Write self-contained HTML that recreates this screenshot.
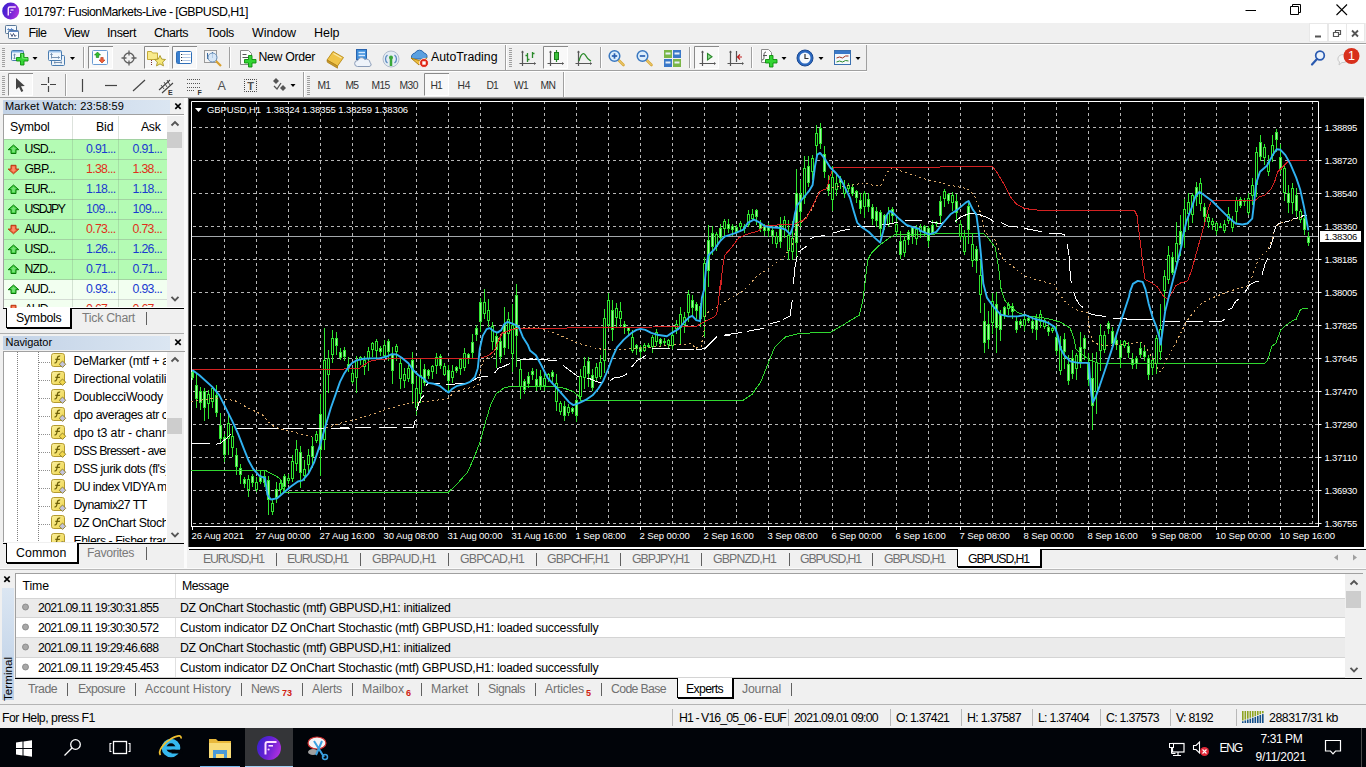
<!DOCTYPE html>
<html lang="en"><head><meta charset="utf-8"><title>101797: FusionMarkets-Live - [GBPUSD,H1]</title>
<style>
html,body{margin:0;padding:0;}
body{width:1366px;height:767px;overflow:hidden;background:#f0f0f0;position:relative;font-family:"Liberation Sans",sans-serif;}
.t{position:absolute;white-space:nowrap;color:#000;}
svg{display:block;overflow:visible;}
</style></head><body>
<div style="position:absolute;left:0px;top:0px;width:1366px;height:23px;background:#fff;"></div>
<svg style="position:absolute;left:2px;top:2px;" width="18" height="18" viewBox="0 0 18 18"><defs><linearGradient id="ficon" x1="0" y1="0.300" x2="1" y2="0.700"><stop offset="0" stop-color="#3c20d0"/><stop offset="0.500" stop-color="#6a22d4"/><stop offset="1" stop-color="#b432e0"/></linearGradient></defs>
<circle cx="8.700" cy="9" r="8.500" fill="url(#ficon)"/><path d="M6.300 13.500v-7a1.500 1.500 0 0 1 1.500-1.500h6" stroke="#ffe0ff" stroke-width="1.500" fill="none"/><path d="M8.500 8h3" stroke="#ffe0ff" stroke-width="1.200"/><circle cx="8.600" cy="10.500" r="0.800" fill="#ffd0ff"/></svg>
<span class="t" style="left:24.00px;top:5.50px;font-size:12.4px;line-height:12.4px;letter-spacing:-0.551px;">101797: FusionMarkets-Live - [GBPUSD,H1]</span>
<svg style="position:absolute;left:1245px;top:4px;" width="12" height="12" viewBox="0 0 12 12"><path d="M0.5 6.5H11" stroke="#000" stroke-width="1"/></svg>
<svg style="position:absolute;left:1290px;top:4px;" width="12" height="12" viewBox="0 0 12 12"><path d="M0.5 2.5H8.5V10.5H0.5Z M2.5 2.5V0.5H10.5V8.5H8.5" stroke="#000" stroke-width="1" fill="none"/></svg>
<svg style="position:absolute;left:1336px;top:4px;" width="12" height="12" viewBox="0 0 12 12"><path d="M0.5 0.5L11 11M11 0.5L0.5 11" stroke="#000" stroke-width="1.1"/></svg>
<div style="position:absolute;left:0px;top:23px;width:1366px;height:21px;background:#f0f0f0;"></div>
<svg style="position:absolute;left:4px;top:24px;" width="16" height="16" viewBox="0 0 16 16"><rect x="1.500" y="1.500" width="11" height="8" rx="0.800" fill="#f4f9fe" stroke="#5a7898"/><path d="M3.500 5.500h6M3.500 5.500l1.200-1.200M7 4.300l1.500 1.200" stroke="#4a78c0" stroke-width="0.900" fill="none"/><rect x="4.500" y="6.500" width="10" height="8" rx="0.800" fill="#fdfeff" stroke="#5a7898"/><path d="M5 7.300h9" stroke="#4a78c0" stroke-width="1.200"/>
<path d="M6.500 9.500l1.500 3 1.500-3 1.500 3 1.300-1.500" stroke="#3a4a70" fill="none" stroke-width="0.900"/></svg>
<span class="t" style="left:28.50px;top:26.62px;font-size:12.5px;line-height:12.5px;letter-spacing:-0.586px;">File</span>
<span class="t" style="left:64.00px;top:26.62px;font-size:12.5px;line-height:12.5px;letter-spacing:-0.467px;">View</span>
<span class="t" style="left:107.00px;top:26.62px;font-size:12.5px;line-height:12.5px;letter-spacing:-0.377px;">Insert</span>
<span class="t" style="left:154.00px;top:26.62px;font-size:12.5px;line-height:12.5px;letter-spacing:-0.470px;">Charts</span>
<span class="t" style="left:206.50px;top:26.62px;font-size:12.5px;line-height:12.5px;letter-spacing:-0.336px;">Tools</span>
<span class="t" style="left:252.00px;top:26.62px;font-size:12.5px;line-height:12.5px;letter-spacing:-0.076px;">Window</span>
<span class="t" style="left:314.00px;top:26.62px;font-size:12.5px;line-height:12.5px;letter-spacing:-0.052px;">Help</span>
<div style="position:absolute;left:1310px;top:24px;width:17px;height:17px;background:#fff;box-shadow:0 0 0 1px #e8e8e8;"></div>
<div style="position:absolute;left:1329px;top:24px;width:17px;height:17px;background:#fff;box-shadow:0 0 0 1px #e8e8e8;"></div>
<div style="position:absolute;left:1347px;top:24px;width:17px;height:17px;background:#fff;box-shadow:0 0 0 1px #e8e8e8;"></div>
<svg style="position:absolute;left:1310px;top:26px;" width="17" height="15" viewBox="0 0 17 15"><path d="M5 10.500h6" stroke="#555" stroke-width="2"/></svg>
<svg style="position:absolute;left:1329px;top:26px;" width="17" height="15" viewBox="0 0 17 15"><path d="M4.500 6.500h5v4h-5z M6.500 6V4.500h5v4H10" stroke="#555" stroke-width="1.200" fill="none"/></svg>
<svg style="position:absolute;left:1347px;top:26px;" width="17" height="15" viewBox="0 0 17 15"><path d="M5 4.500l6 6M11 4.500l-6 6" stroke="#555" stroke-width="1.800"/></svg>
<svg style="position:absolute;left:0px;top:0px;" width="1366" height="100" viewBox="0 0 1366 100"><rect x="0" y="43" width="1366" height="1" fill="#a0a0a0"/><rect x="0" y="44" width="1366" height="1" fill="#fff"/><rect x="0" y="70" width="867" height="1" fill="#a0a0a0"/><rect x="0" y="71" width="867" height="1" fill="#fff"/><rect x="866" y="45" width="1" height="26" fill="#a0a0a0"/><rect x="2" y="48" width="3" height="1" fill="#a0a0a0"/><rect x="2" y="50" width="3" height="1" fill="#a0a0a0"/><rect x="2" y="52" width="3" height="1" fill="#a0a0a0"/><rect x="2" y="54" width="3" height="1" fill="#a0a0a0"/><rect x="2" y="56" width="3" height="1" fill="#a0a0a0"/><rect x="2" y="58" width="3" height="1" fill="#a0a0a0"/><rect x="2" y="60" width="3" height="1" fill="#a0a0a0"/><rect x="2" y="62" width="3" height="1" fill="#a0a0a0"/><rect x="2" y="64" width="3" height="1" fill="#a0a0a0"/><rect x="2" y="66" width="3" height="1" fill="#a0a0a0"/><g transform="translate(11,50)"><rect x="0.500" y="0.500" width="12" height="10" rx="1" fill="#f2f7fc" stroke="#4a7cb0"/><rect x="1" y="1" width="11" height="1.500" fill="#7fb0e4"/><path d="M3.500 4v5M2.300 5.200l1.200-1.200 1.200 1.200M2.300 7.800l1.200 1.200 1.200-1.200" stroke="#6a88aa" fill="none" stroke-width="0.900"/><g transform="translate(5.5,3.5)"><path d="M4 0h3.500v4h4v3.500h-4v4h-3.500v-4h-4v-3.500h4z" fill="#36d636" stroke="#0e8e0e" stroke-width="0.900"/><path d="M4.800 0.800h1.200v4h4.700v1.200" stroke="#a0f4a0" fill="none" stroke-width="0.800" opacity="0.700"/></g></g><path d="M32.5 57h5l-2.500 3z" fill="#000"/><g transform="translate(48,50)"><rect x="3.500" y="5.500" width="13" height="10" rx="1" fill="#eef4fa" stroke="#4a7cb0"/><path d="M6 12.500h8M6 12.500l1.300-1.200M6 12.500l1.300 1.200M14 12.500l-1.300-1.200M14 12.500l-1.300 1.200" stroke="#6a88aa" stroke-width="0.900" fill="none"/><rect x="0.500" y="0.500" width="13" height="10" rx="1" fill="#f2f7fc" stroke="#4a7cb0"/><rect x="1" y="1" width="12" height="1.500" fill="#9cc2ea"/><path d="M3.500 3.500v5M3.500 7.500h8M2.300 4.700l1.200-1.200 1.200 1.200M10.300 6.300l1.200 1.200-1.200 1.200" stroke="#6a88aa" stroke-width="0.900" fill="none"/></g><path d="M70 57h5l-2.500 3z" fill="#000"/><rect x="83" y="47" width="1" height="21" fill="#a0a0a0"/><rect x="84" y="47" width="1" height="21" fill="#fff"/><rect x="88" y="46" width="25" height="23" fill="#f8f8f8"/><path d="M88.5 69V46.5H113" stroke="#8a8a8a" fill="none"/><path d="M88.5 68.5H112.5V47" stroke="#fff" fill="none"/><g transform="translate(92,50)"><rect x="0.500" y="0.500" width="15" height="14" rx="1" fill="#fbfdff" stroke="#6a9cd4"/><path d="M5.500 2l3 3h-1.800v2.500h-2.400v-2.500h-1.800z" fill="#2ec02e" stroke="#0a7a0a" stroke-width="0.600"/><path d="M10 13l3-3h-1.800v-2.500h-2.400v2.500h-1.800z" fill="#f0603a" stroke="#b03010" stroke-width="0.600"/></g><g transform="translate(121,50)"><circle cx="8" cy="8" r="5" fill="none" stroke="#606060" stroke-width="1.300"/><path d="M8 0.500v5M8 10.500v5M0.500 8h5M10.500 8h5" stroke="#606060" stroke-width="1.300"/></g><rect x="144" y="46" width="25" height="23" fill="#f8f8f8"/><path d="M144.5 69V46.5H169" stroke="#8a8a8a" fill="none"/><path d="M144.5 68.5H168.5V47" stroke="#fff" fill="none"/><g transform="translate(147,49)"><path d="M0.500 2.500h4l1 1.500h5v6.500h-10z" fill="#f8ea8c" stroke="#c4aa38"/><path d="M13 6.500l1.700 3.600 3.800.4-2.900 2.600.9 3.800-3.500-2-3.500 2 .9-3.800-2.900-2.600 3.800-.4z" fill="#f6e878" stroke="#a89428" stroke-width="0.900"/><path d="M4.500 11v6" stroke="#803030" stroke-dasharray="1 1"/></g><rect x="172" y="46" width="25" height="23" fill="#f8f8f8"/><path d="M172.5 69V46.5H197" stroke="#8a8a8a" fill="none"/><path d="M172.5 68.5H196.5V47" stroke="#fff" fill="none"/><g transform="translate(176,51)"><rect x="0.500" y="0.500" width="15" height="12" rx="1" fill="#fff" stroke="#2f6fb8"/><rect x="1" y="1" width="3" height="11" fill="#3a80d0"/><path d="M6.500 3.500h8M6.500 6.500h8M6.500 9.500h8" stroke="#b4c8e4"/><path d="M5 3.500h1.200M5 6.500h1.200M5 9.500h1.200" stroke="#203040"/></g><g transform="translate(204,50)"><rect x="0.500" y="0.500" width="12" height="12" fill="#f4f4f4" stroke="#9a9a9a"/><path d="M3.500 3v6M8.500 2v6" stroke="#3a6aa0"/><circle cx="8.500" cy="7.500" r="4.500" fill="#cfe4f8" fill-opacity="0.800" stroke="#6a90b8"/><path d="M12 11l5 5" stroke="#d8a030" stroke-width="2.200"/></g><rect x="229" y="47" width="1" height="21" fill="#a0a0a0"/><rect x="230" y="47" width="1" height="21" fill="#fff"/><g transform="translate(239,50)"><path d="M1.500 0.500h8l3 3v11h-11z" fill="#fdfdfd" stroke="#8a8a8a"/><path d="M3.500 4.500h4M3.500 7.500h6" stroke="#555"/><g transform="translate(5.5,5.5)"><path d="M4 0h3.500v4h4v3.500h-4v4h-3.500v-4h-4v-3.500h4z" fill="#33d433" stroke="#0c8c0c" stroke-width="0.900"/></g></g><g transform="translate(326,50)"><path d="M1 10l6-8.500 10.500 6-6 8.500z" fill="#f0c448" stroke="#b88a1a" stroke-width="0.900"/><path d="M1 10l0.300 2.200 10.200 6 0-2.200z" fill="#c89a2a" stroke="#a87a12" stroke-width="0.700"/><path d="M7.500 3.500l8 4.500" stroke="#fbe9a8" stroke-width="1.200"/></g><g transform="translate(354,49)"><rect x="2.500" y="0.500" width="10" height="10" fill="#3d8edb" stroke="#2a64ae"/><path d="M4.500 3.500h6.500M4.500 6.500h6.500" stroke="#d8eaff" stroke-width="1.400"/><path d="M3.500 17.500a3 3 0 0 1 0.300-6 3.800 3.800 0 0 1 7-1 3.500 3.500 0 0 1 5.200 3.200 2 2 0 0 1-1 3.800z" fill="#eef3fa" stroke="#8a9cb8"/></g><g transform="translate(382,50)"><circle cx="9" cy="9" r="8" fill="#e4ecf4" stroke="#b0bccc"/><path d="M5.500 13a5 5 0 0 1 0-8M12.500 5a5 5 0 0 1 0 8" stroke="#5a8ac0" fill="none" stroke-width="1.300"/><path d="M9 7v9" stroke="#3aa83a" stroke-width="2.500"/><circle cx="9" cy="7.500" r="2" fill="#3aa83a"/></g><g transform="translate(410,49)"><path d="M2 10a4 4 0 0 1 3-6 5 5 0 0 1 9 0 3.500 3.500 0 0 1 2 6z" fill="#5aa0e0" stroke="#2a68b0"/><path d="M1 9l8 7 8-7-8 2.500z" fill="#f0c040" stroke="#b08010"/><circle cx="14" cy="14" r="4.500" fill="#e02818" stroke="#fff" stroke-width="0.800"/><rect x="12.300" y="12.300" width="3.400" height="3.400" fill="#fff"/></g><rect x="505" y="45" width="1" height="25" fill="#a0a0a0"/><rect x="506" y="45" width="1" height="25" fill="#fff"/><rect x="509" y="48" width="3" height="1" fill="#a0a0a0"/><rect x="509" y="50" width="3" height="1" fill="#a0a0a0"/><rect x="509" y="52" width="3" height="1" fill="#a0a0a0"/><rect x="509" y="54" width="3" height="1" fill="#a0a0a0"/><rect x="509" y="56" width="3" height="1" fill="#a0a0a0"/><rect x="509" y="58" width="3" height="1" fill="#a0a0a0"/><rect x="509" y="60" width="3" height="1" fill="#a0a0a0"/><rect x="509" y="62" width="3" height="1" fill="#a0a0a0"/><rect x="509" y="64" width="3" height="1" fill="#a0a0a0"/><rect x="509" y="66" width="3" height="1" fill="#a0a0a0"/><g transform="translate(519,50)"><path d="M3.500 1v15M0.500 13.500h16" stroke="#555" stroke-width="1.200"/><path d="M8.500 3v9M6.500 5.500h2M8.500 9.500h2" stroke="#2a8a2a" stroke-width="1.300"/><path d="M13.500 2v6M13.500 3.500h2" stroke="#2a8a2a" stroke-width="1.300"/><path d="M2 2.500l1.500-2 1.500 2M15 12l2 1.500-2 1.500" fill="#555"/></g><rect x="543" y="46" width="25" height="23" fill="#f8f8f8"/><path d="M543.5 69V46.5H568" stroke="#8a8a8a" fill="none"/><path d="M543.5 68.5H567.5V47" stroke="#fff" fill="none"/><g transform="translate(547,50)"><path d="M3.500 1v15M0.500 13.500h16" stroke="#555" stroke-width="1.200"/><path d="M9.500 0v12" stroke="#2a8a2a" stroke-width="1.200"/><rect x="7.500" y="2.500" width="4" height="7" fill="#3ac03a" stroke="#1a7a1a"/><path d="M2 2.500l1.500-2 1.500 2M15 12l2 1.500-2 1.500" fill="#555"/></g><g transform="translate(575,50)"><path d="M3.500 1v15M0.500 13.500h16" stroke="#555" stroke-width="1.200"/><path d="M4 11c2-8 5-9 7-5s3 4 5 5" stroke="#2a8a2a" stroke-width="1.300" fill="none"/><path d="M2 2.500l1.500-2 1.500 2M15 12l2 1.500-2 1.500" fill="#555"/></g><rect x="600" y="47" width="1" height="21" fill="#a0a0a0"/><rect x="601" y="47" width="1" height="21" fill="#fff"/><g transform="translate(608,49)"><path d="M10.500 11l5 5" stroke="#d8a838" stroke-width="2.600" stroke-linecap="round"/><path d="M10.500 11l5 5" stroke="#f4dc90" stroke-width="0.900" stroke-linecap="round"/><circle cx="6.500" cy="7" r="5.300" fill="#dceefc" stroke="#3a78c0" stroke-width="1.500"/><path d="M3.800 7h5.400" stroke="#2a60b0" stroke-width="1.700"/><path d="M6.500 4.300v5.400" stroke="#2a60b0" stroke-width="1.700"/></g><g transform="translate(636,49)"><path d="M10.500 11l5 5" stroke="#d8a838" stroke-width="2.600" stroke-linecap="round"/><path d="M10.500 11l5 5" stroke="#f4dc90" stroke-width="0.900" stroke-linecap="round"/><circle cx="6.500" cy="7" r="5.300" fill="#dceefc" stroke="#3a78c0" stroke-width="1.500"/><path d="M3.800 7h5.400" stroke="#2a60b0" stroke-width="1.700"/></g><g transform="translate(664,50)"><rect x="0" y="0" width="8" height="8" fill="#7ab648"/><rect x="9" y="0" width="8" height="8" fill="#3a78c8"/><rect x="0" y="9" width="8" height="8" fill="#3a78c8"/><rect x="9" y="9" width="8" height="8" fill="#7ab648"/><path d="M1.500 3.500h5M10.500 3.500h5M1.500 12.500h5M10.500 12.500h5" stroke="#e8f0f8" stroke-width="2"/></g><rect x="689" y="47" width="1" height="21" fill="#a0a0a0"/><rect x="690" y="47" width="1" height="21" fill="#fff"/><rect x="694" y="46" width="25" height="23" fill="#f8f8f8"/><path d="M694.5 69V46.5H719" stroke="#8a8a8a" fill="none"/><path d="M694.5 68.5H718.5V47" stroke="#fff" fill="none"/><g transform="translate(699,50)"><path d="M3.500 1v15M0.500 13.500h15" stroke="#555" stroke-width="1.200"/><path d="M8.500 3.500l4.500 3.200-4.500 3.200z" fill="#8fdc8f" stroke="#2a8a2a" stroke-width="1.100"/><path d="M2 2.500l1.500-2 1.500 2M15 12l2 1.500-2 1.500" fill="#555"/></g><g transform="translate(727,50)"><path d="M3.500 1v15M0.500 13.500h15" stroke="#555" stroke-width="1.200"/><path d="M9.500 1v11" stroke="#555" stroke-width="1.200"/><path d="M15 7h-4M13 4.500l-2.500 2.500 2.500 2.500" stroke="#c02020" stroke-width="1.200" fill="none"/><path d="M2 2.500l1.500-2 1.500 2M15 12l2 1.500-2 1.500" fill="#555"/></g><rect x="751" y="47" width="1" height="21" fill="#a0a0a0"/><rect x="752" y="47" width="1" height="21" fill="#fff"/><g transform="translate(760,49)"><path d="M1.500 0.500h7l3 3v10h-10z" fill="#fdfdfd" stroke="#8a8a8a"/><path d="M6 3c-2 0-2 2-2 4s0 4-2 4M3 6.500h4" stroke="#555" fill="none"/><g transform="translate(5.5,6.5)"><path d="M4 0h3.500v4h4v3.500h-4v4h-3.500v-4h-4v-3.500h4z" fill="#33d433" stroke="#0c8c0c" stroke-width="0.900"/></g></g><path d="M781.5 57h5l-2.500 3z" fill="#000"/><g transform="translate(796,49)"><circle cx="9" cy="9" r="8" fill="#2a68c0" stroke="#1a4890"/><circle cx="9" cy="9" r="5.500" fill="#f4f8fc"/><path d="M9 5v4.500h3.500" stroke="#333" fill="none" stroke-width="1.200"/></g><path d="M818.5 57h5l-2.500 3z" fill="#000"/><g transform="translate(834,50)"><rect x="0.500" y="0.500" width="16" height="14" fill="#f4f8fc" stroke="#3a70b0"/><rect x="1" y="1" width="15" height="3" fill="#3a78c8"/><path d="M2.500 8l3-1 3 1 3-2 3 0" stroke="#a03020" fill="none"/><path d="M2.500 12l3-1 3 1 3-1.500 3 .5" stroke="#2a8a2a" fill="none"/></g><path d="M855.5 57h5l-2.500 3z" fill="#000"/><g transform="translate(1311,50)"><circle cx="9" cy="5.500" r="4.300" fill="#eaf2fc" stroke="#2a5ab0" stroke-width="1.700"/><path d="M6 9l-5 5.500" stroke="#2a5ab0" stroke-width="2.200" stroke-linecap="round"/></g><g transform="translate(1336,48)"><path d="M2 10a5 4 0 1 1 4 4.500l-3 2.500 .5-3a5 4 0 0 1-1.500-4z" fill="#f4f4f4" stroke="#c8c8c8"/><circle cx="15.500" cy="8" r="8" fill="#d8301c"/></g></svg><span class="t" style="left:258.50px;top:50.59px;font-size:12.3px;line-height:12.3px;letter-spacing:-0.330px;">New Order</span><span class="t" style="left:431.00px;top:50.59px;font-size:12.3px;line-height:12.3px;letter-spacing:-0.005px;">AutoTrading</span><span class="t" style="left:1348.00px;top:49.92px;font-size:12.5px;line-height:12.5px;color:#fff;">1</span>
<svg style="position:absolute;left:0px;top:0px;" width="1366" height="100" viewBox="0 0 1366 100"><rect x="0" y="97" width="1364" height="1" fill="#a0a0a0"/><rect x="563" y="72" width="1" height="26" fill="#a0a0a0"/><rect x="564" y="72" width="1" height="25" fill="#fff"/><rect x="2" y="76" width="3" height="1" fill="#a0a0a0"/><rect x="2" y="78" width="3" height="1" fill="#a0a0a0"/><rect x="2" y="80" width="3" height="1" fill="#a0a0a0"/><rect x="2" y="82" width="3" height="1" fill="#a0a0a0"/><rect x="2" y="84" width="3" height="1" fill="#a0a0a0"/><rect x="2" y="86" width="3" height="1" fill="#a0a0a0"/><rect x="2" y="88" width="3" height="1" fill="#a0a0a0"/><rect x="2" y="90" width="3" height="1" fill="#a0a0a0"/><rect x="2" y="92" width="3" height="1" fill="#a0a0a0"/><rect x="2" y="94" width="3" height="1" fill="#a0a0a0"/><rect x="8" y="73" width="25" height="23" fill="#f8f8f8"/><path d="M8.5 96V73.5H33" stroke="#8a8a8a" fill="none"/><path d="M8.5 95.5H32.5V74" stroke="#fff" fill="none"/><g transform="translate(16,78)"><path d="M0 0v11.500l3-2.500 2.300 5 2-.9-2.300-4.900 3.800-.2z" fill="#444"/></g><g transform="translate(41,77)"><path d="M7.500 0v6M7.500 9v6M0 7.500h6M9 7.500h6" stroke="#444" stroke-width="1.200"/></g><rect x="65" y="74" width="1" height="22" fill="#a0a0a0"/><rect x="66" y="74" width="1" height="22" fill="#fff"/><path d="M82.500 79v13" stroke="#444" stroke-width="1.200"/><path d="M105 85.500h12" stroke="#444" stroke-width="1.200"/><path d="M133 91l12-11" stroke="#444" stroke-width="1.200"/><g transform="translate(158,77)"><path d="M1 13l11-10M4 16l11-10" stroke="#444" stroke-width="1.100"/><path d="M3 8l3 4M6 5l3 5M9 3l3 5" stroke="#444" stroke-width="0.900"/></g><g transform="translate(187,78)"><path d="M0 1.500h13M0 5.500h13M0 9.500h13M0 12.500h8" stroke="#555" stroke-dasharray="1 1"/></g><rect x="303" y="72" width="1" height="25" fill="#a0a0a0"/><rect x="304" y="72" width="1" height="25" fill="#fff"/><rect x="307" y="76" width="3" height="1" fill="#a0a0a0"/><rect x="307" y="78" width="3" height="1" fill="#a0a0a0"/><rect x="307" y="80" width="3" height="1" fill="#a0a0a0"/><rect x="307" y="82" width="3" height="1" fill="#a0a0a0"/><rect x="307" y="84" width="3" height="1" fill="#a0a0a0"/><rect x="307" y="86" width="3" height="1" fill="#a0a0a0"/><rect x="307" y="88" width="3" height="1" fill="#a0a0a0"/><rect x="307" y="90" width="3" height="1" fill="#a0a0a0"/><rect x="307" y="92" width="3" height="1" fill="#a0a0a0"/><rect x="307" y="94" width="3" height="1" fill="#a0a0a0"/><g transform="translate(272,78)"><path d="M1 3l3-3 3 3-3 3z" fill="#555"/><path d="M8 10l3-3 3 3-3 3z" fill="#555"/><path d="M2 8l3 3 4-6" stroke="#555" stroke-width="1.300" fill="none"/></g><path d="M290.5 84h5l-2.500 3z" fill="#000"/><rect x="424" y="73" width="25" height="23" fill="#f8f8f8"/><path d="M424.5 96V73.5H449" stroke="#8a8a8a" fill="none"/><path d="M424.5 95.5H448.5V74" stroke="#fff" fill="none"/><rect x="244.500" y="79.500" width="12" height="12" fill="none" stroke="#444" stroke-dasharray="1 1" stroke-dashoffset="0.500"/></svg><span class="t" style="left:168.00px;top:89.07px;font-size:7px;line-height:7px;color:#333;font-weight:bold;">E</span><span class="t" style="left:197.50px;top:89.07px;font-size:7px;line-height:7px;color:#333;font-weight:bold;">F</span><span class="t" style="left:217.50px;top:80.42px;font-size:12.5px;line-height:12.5px;color:#505050;">A</span><span class="t" style="left:247.30px;top:81.19px;font-size:11px;line-height:11px;color:#505050;font-weight:bold;">T</span><span class="t" style="left:317.50px;top:80.58px;font-size:10.3px;line-height:10.3px;letter-spacing:-0.904px;color:#333;">M1</span><span class="t" style="left:345.50px;top:80.58px;font-size:10.3px;line-height:10.3px;letter-spacing:-0.904px;color:#333;">M5</span><span class="t" style="left:371.50px;top:80.58px;font-size:10.3px;line-height:10.3px;letter-spacing:-0.679px;color:#333;">M15</span><span class="t" style="left:399.50px;top:80.58px;font-size:10.3px;line-height:10.3px;letter-spacing:-0.513px;color:#333;">M30</span><span class="t" style="left:430.50px;top:80.58px;font-size:10.3px;line-height:10.3px;letter-spacing:-0.834px;color:#333;">H1</span><span class="t" style="left:457.50px;top:80.58px;font-size:10.3px;line-height:10.3px;letter-spacing:-0.084px;color:#333;">H4</span><span class="t" style="left:486.50px;top:80.58px;font-size:10.3px;line-height:10.3px;letter-spacing:-0.834px;color:#333;">D1</span><span class="t" style="left:514.00px;top:80.58px;font-size:10.3px;line-height:10.3px;letter-spacing:-0.725px;color:#333;">W1</span><span class="t" style="left:540.50px;top:80.58px;font-size:10.3px;line-height:10.3px;letter-spacing:-0.509px;color:#333;">MN</span>
<svg style="position:absolute;left:0px;top:0px;" width="1366" height="548" viewBox="0 0 1366 548"><rect x="187" y="98" width="1177" height="449" fill="#000"/><rect x="1364" y="96" width="2" height="453" fill="#fff"/><rect x="187" y="98" width="1" height="449" fill="#a0a0a0"/><rect x="188" y="98" width="1" height="449" fill="#606060"/><rect x="188" y="98" width="1176" height="1" fill="#606060"/><path d="M191.500 526V101.500H1318.500V526" stroke="#fff" fill="none"/><path d="M191 526.500H1319" stroke="#fff" fill="none"/><path d="M224.5 102V526 M256.5 102V526 M288.5 102V526 M320.5 102V526 M352.5 102V526 M384.5 102V526 M416.5 102V526 M448.5 102V526 M480.5 102V526 M512.5 102V526 M544.5 102V526 M576.5 102V526 M608.5 102V526 M640.5 102V526 M672.5 102V526 M704.5 102V526 M736.5 102V526 M768.5 102V526 M800.5 102V526 M832.5 102V526 M864.5 102V526 M896.5 102V526 M928.5 102V526 M960.5 102V526 M992.5 102V526 M1024.5 102V526 M1056.5 102V526 M1088.5 102V526 M1120.5 102V526 M1152.5 102V526 M1184.5 102V526 M1216.5 102V526 M1248.5 102V526 M1280.5 102V526 M1312.5 102V526" stroke="#b6b6b6" stroke-dasharray="3 3" stroke-dashoffset="1" fill="none"/><path d="M193 127.5H1318 M193 160.5H1318 M193 193.5H1318 M193 226.5H1318 M193 259.5H1318 M193 292.5H1318 M193 325.5H1318 M193 358.5H1318 M193 391.5H1318 M193 424.5H1318 M193 457.5H1318 M193 490.5H1318 M193 523.5H1318" stroke="#b6b6b6" stroke-dasharray="3 3" fill="none"/><path d="M1319 127.5h2.500 M1319 160.5h2.500 M1319 193.5h2.500 M1319 226.5h2.500 M1319 259.5h2.500 M1319 292.5h2.500 M1319 325.5h2.500 M1319 358.5h2.500 M1319 391.5h2.500 M1319 424.5h2.500 M1319 457.5h2.500 M1319 490.5h2.500 M1319 523.5h2.500" stroke="#fff"/><path d="M192.5 527v3 M256.5 527v3 M320.5 527v3 M384.5 527v3 M448.5 527v3 M512.5 527v3 M576.5 527v3 M640.5 527v3 M704.5 527v3 M768.5 527v3 M832.5 527v3 M896.5 527v3 M960.5 527v3 M1024.5 527v3 M1088.5 527v3 M1152.5 527v3 M1216.5 527v3 M1280.5 527v3" stroke="#fff"/><path d="M192 236.500H1318" stroke="#a4a8ac"/><path d="M196.5 373V408 M200.5 387V410 M204.5 388V421 M208.5 390V419 M212.5 386V408 M216.5 385V417 M220.5 413V443 M224.5 434V462 M228.5 414V455 M232.5 426V457 M236.5 448V475 M240.5 464V484 M244.5 477V488 M248.5 475V497 M252.5 474V487 M256.5 477V492 M260.5 471V484 M264.5 471V487 M268.5 476V515 M272.5 500V515 M276.5 482V503 M280.5 480V494 M284.5 474V491 M288.5 474V484 M292.5 455V482 M296.5 440V471 M300.5 446V488 M304.5 460V481 M308.5 449V474 M312.5 437V468 M316.5 431V443 M320.5 394V476 M324.5 328V450 M328.5 350V393 M332.5 330V363 M336.5 332V355 M340.5 348V360 M344.5 347V361 M348.5 357V372 M352.5 369V384 M356.5 356V393 M360.5 356V365 M364.5 356V375 M368.5 347V371 M372.5 342V357 M376.5 339V358 M380.5 346V356 M384.5 340V358 M388.5 339V361 M392.5 347V384 M396.5 344V361 M400.5 359V389 M404.5 368V388 M408.5 365V382 M412.5 352V404 M416.5 376V415 M420.5 358V403 M424.5 364V386 M428.5 369V379 M432.5 365V379 M436.5 353V374 M440.5 354V369 M444.5 363V376 M448.5 365V391 M452.5 365V383 M456.5 366V373 M460.5 358V375 M464.5 348V371 M468.5 353V364 M472.5 334V358 M476.5 325V341 M480.5 298V332 M484.5 289V319 M488.5 299V327 M492.5 322V350 M496.5 332V368 M500.5 335V363 M504.5 307V355 M508.5 312V349 M512.5 304V372 M516.5 284V367 M520.5 359V399 M524.5 379V394 M528.5 372V388 M532.5 368V380 M536.5 369V391 M540.5 370V390 M544.5 373V391 M548.5 373V382 M552.5 370V382 M556.5 374V411 M560.5 401V415 M564.5 401V421 M568.5 404V416 M572.5 407V414 M576.5 398V422 M580.5 369V401 M584.5 357V389 M588.5 357V387 M592.5 369V391 M596.5 363V382 M600.5 355V379 M604.5 309V373 M608.5 293V329 M612.5 300V341 M616.5 303V328 M620.5 302V327 M624.5 321V334 M628.5 327V335 M632.5 330V353 M636.5 344V355 M640.5 345V358 M644.5 343V352 M648.5 343V348 M652.5 335V353 M656.5 329V346 M660.5 338V346 M664.5 338V345 M668.5 339V348 M672.5 327V349 M676.5 320V334 M680.5 307V345 M684.5 312V333 M688.5 290V322 M692.5 295V316 M696.5 302V319 M700.5 303V327 M704.5 257V337 M708.5 225V287 M712.5 226V255 M716.5 232V251 M720.5 224V241 M724.5 219V238 M728.5 219V233 M732.5 224V236 M736.5 225V234 M740.5 221V232 M744.5 224V233 M748.5 210V227 M752.5 209V221 M756.5 209V225 M760.5 220V232 M764.5 224V236 M768.5 223V237 M772.5 226V244 M776.5 232V248 M780.5 217V248 M784.5 216V238 M788.5 220V260 M792.5 221V260 M796.5 169V258 M800.5 180V227 M804.5 156V204 M808.5 156V187 M812.5 155V180 M816.5 125V159 M820.5 123V149 M824.5 146V178 M828.5 175V196 M832.5 166V211 M836.5 175V196 M840.5 176V189 M844.5 180V198 M848.5 183V192 M852.5 184V196 M856.5 190V203 M860.5 193V214 M864.5 191V218 M868.5 193V212 M872.5 204V225 M876.5 207V227 M880.5 210V236 M884.5 214V230 M888.5 207V227 M892.5 207V223 M896.5 218V237 M900.5 231V259 M904.5 236V257 M908.5 230V245 M912.5 226V244 M916.5 225V245 M920.5 224V238 M924.5 225V237 M928.5 226V247 M932.5 220V235 M936.5 221V227 M940.5 196V224 M944.5 189V207 M948.5 193V204 M952.5 192V211 M956.5 194V223 M960.5 220V240 M964.5 230V255 M968.5 203V244 M972.5 233V267 M976.5 246V273 M980.5 260V313 M984.5 303V353 M988.5 311V349 M992.5 293V334 M996.5 292V353 M1000.5 310V341 M1004.5 306V319 M1008.5 302V315 M1012.5 303V319 M1016.5 316V333 M1020.5 319V328 M1024.5 316V331 M1028.5 315V323 M1032.5 317V333 M1036.5 314V340 M1040.5 310V328 M1044.5 318V329 M1048.5 321V336 M1052.5 327V333 M1056.5 325V355 M1060.5 336V375 M1064.5 333V369 M1068.5 355V385 M1072.5 350V379 M1076.5 353V380 M1080.5 332V368 M1084.5 335V360 M1088.5 353V386 M1092.5 353V430 M1096.5 352V414 M1100.5 324V371 M1104.5 331V353 M1108.5 321V334 M1112.5 327V347 M1116.5 336V350 M1120.5 340V368 M1124.5 340V348 M1128.5 342V358 M1132.5 353V369 M1136.5 356V369 M1140.5 342V358 M1144.5 345V361 M1148.5 355V380 M1152.5 356V375 M1156.5 335V374 M1160.5 304V360 M1164.5 270V311 M1168.5 246V284 M1172.5 252V275 M1176.5 222V269 M1180.5 215V256 M1184.5 199V248 M1188.5 193V230 M1192.5 193V223 M1196.5 182V206 M1200.5 178V211 M1204.5 203V224 M1208.5 214V228 M1212.5 218V230 M1216.5 222V235 M1220.5 223V228 M1224.5 220V233 M1228.5 207V224 M1232.5 216V232 M1236.5 197V224 M1240.5 197V208 M1244.5 198V206 M1248.5 193V215 M1252.5 178V205 M1256.5 147V197 M1260.5 135V161 M1264.5 144V165 M1268.5 155V176 M1272.5 135V162 M1276.5 129V152 M1280.5 144V174 M1284.5 164V201 M1288.5 185V213 M1292.5 183V214 M1296.5 188V217 M1300.5 209V223 M1304.5 215V235 M1308.5 232V246 M192.500 370V380" stroke="#2fe62f" fill="none"/><g fill="#000" stroke="#2fe62f"><rect x="207.5" y="394.5" width="2" height="9"/><rect x="211.5" y="388.5" width="2" height="13"/><rect x="227.5" y="423.5" width="2" height="15"/><rect x="231.5" y="436.5" width="2" height="11"/><rect x="247.5" y="479.5" width="2" height="10"/><rect x="255.5" y="482.5" width="2" height="7"/><rect x="271.5" y="503.5" width="2" height="8"/><rect x="279.5" y="483.5" width="2" height="6"/><rect x="287.5" y="478.5" width="2" height="2"/><rect x="291.5" y="461.5" width="2" height="17"/><rect x="295.5" y="449.5" width="2" height="14"/><rect x="303.5" y="469.5" width="2" height="6"/><rect x="307.5" y="455.5" width="2" height="9"/><rect x="315.5" y="434.5" width="2" height="6"/><rect x="323.5" y="360.5" width="2" height="79"/><rect x="327.5" y="358.5" width="2" height="16"/><rect x="331.5" y="338.5" width="2" height="16"/><rect x="351.5" y="373.5" width="2" height="8"/><rect x="355.5" y="360.5" width="2" height="17"/><rect x="359.5" y="357.5" width="2" height="2"/><rect x="363.5" y="360.5" width="2" height="6"/><rect x="367.5" y="351.5" width="2" height="7"/><rect x="371.5" y="343.5" width="2" height="6"/><rect x="375.5" y="341.5" width="2" height="9"/><rect x="383.5" y="345.5" width="2" height="10"/><rect x="395.5" y="346.5" width="2" height="5"/><rect x="399.5" y="363.5" width="2" height="15"/><rect x="403.5" y="374.5" width="2" height="6"/><rect x="407.5" y="368.5" width="2" height="10"/><rect x="415.5" y="388.5" width="2" height="19"/><rect x="419.5" y="375.5" width="2" height="18"/><rect x="431.5" y="366.5" width="2" height="5"/><rect x="435.5" y="357.5" width="2" height="8"/><rect x="443.5" y="366.5" width="2" height="8"/><rect x="451.5" y="371.5" width="2" height="6"/><rect x="459.5" y="359.5" width="2" height="9"/><rect x="463.5" y="353.5" width="2" height="14"/><rect x="483.5" y="302.5" width="2" height="11"/><rect x="487.5" y="310.5" width="2" height="10"/><rect x="491.5" y="326.5" width="2" height="15"/><rect x="507.5" y="319.5" width="2" height="14"/><rect x="511.5" y="325.5" width="2" height="28"/><rect x="519.5" y="369.5" width="2" height="17"/><rect x="543.5" y="378.5" width="2" height="7"/><rect x="547.5" y="374.5" width="2" height="4"/><rect x="555.5" y="383.5" width="2" height="18"/><rect x="559.5" y="403.5" width="2" height="8"/><rect x="567.5" y="407.5" width="2" height="5"/><rect x="579.5" y="376.5" width="2" height="20"/><rect x="583.5" y="366.5" width="2" height="11"/><rect x="595.5" y="367.5" width="2" height="10"/><rect x="599.5" y="362.5" width="2" height="14"/><rect x="603.5" y="318.5" width="2" height="42"/><rect x="607.5" y="300.5" width="2" height="24"/><rect x="615.5" y="308.5" width="2" height="9"/><rect x="619.5" y="311.5" width="2" height="7"/><rect x="631.5" y="337.5" width="2" height="13"/><rect x="643.5" y="345.5" width="2" height="5"/><rect x="647.5" y="345.5" width="2" height="1"/><rect x="651.5" y="337.5" width="2" height="9"/><rect x="655.5" y="332.5" width="2" height="9"/><rect x="663.5" y="341.5" width="2" height="1"/><rect x="667.5" y="340.5" width="2" height="4"/><rect x="671.5" y="335.5" width="2" height="10"/><rect x="675.5" y="324.5" width="2" height="4"/><rect x="679.5" y="314.5" width="2" height="13"/><rect x="683.5" y="317.5" width="2" height="7"/><rect x="687.5" y="294.5" width="2" height="18"/><rect x="703.5" y="263.5" width="2" height="53"/><rect x="715.5" y="234.5" width="2" height="12"/><rect x="723.5" y="221.5" width="2" height="7"/><rect x="739.5" y="223.5" width="2" height="3"/><rect x="743.5" y="226.5" width="2" height="2"/><rect x="747.5" y="214.5" width="2" height="10"/><rect x="751.5" y="214.5" width="2" height="4"/><rect x="775.5" y="236.5" width="2" height="7"/><rect x="783.5" y="220.5" width="2" height="9"/><rect x="787.5" y="235.5" width="2" height="15"/><rect x="791.5" y="238.5" width="2" height="13"/><rect x="803.5" y="168.5" width="2" height="29"/><rect x="811.5" y="158.5" width="2" height="13"/><rect x="815.5" y="133.5" width="2" height="12"/><rect x="831.5" y="177.5" width="2" height="22"/><rect x="835.5" y="183.5" width="2" height="6"/><rect x="843.5" y="187.5" width="2" height="6"/><rect x="847.5" y="185.5" width="2" height="3"/><rect x="863.5" y="193.5" width="2" height="13"/><rect x="887.5" y="213.5" width="2" height="11"/><rect x="895.5" y="224.5" width="2" height="7"/><rect x="903.5" y="240.5" width="2" height="12"/><rect x="915.5" y="229.5" width="2" height="9"/><rect x="919.5" y="227.5" width="2" height="4"/><rect x="935.5" y="222.5" width="2" height="1"/><rect x="943.5" y="191.5" width="2" height="7"/><rect x="951.5" y="195.5" width="2" height="7"/><rect x="959.5" y="224.5" width="2" height="12"/><rect x="963.5" y="236.5" width="2" height="15"/><rect x="971.5" y="244.5" width="2" height="16"/><rect x="979.5" y="275.5" width="2" height="19"/><rect x="991.5" y="301.5" width="2" height="21"/><rect x="1007.5" y="304.5" width="2" height="4"/><rect x="1023.5" y="319.5" width="2" height="6"/><rect x="1039.5" y="314.5" width="2" height="7"/><rect x="1043.5" y="320.5" width="2" height="6"/><rect x="1051.5" y="328.5" width="2" height="2"/><rect x="1059.5" y="346.5" width="2" height="24"/><rect x="1075.5" y="355.5" width="2" height="13"/><rect x="1095.5" y="362.5" width="2" height="29"/><rect x="1099.5" y="335.5" width="2" height="15"/><rect x="1103.5" y="335.5" width="2" height="14"/><rect x="1123.5" y="341.5" width="2" height="4"/><rect x="1151.5" y="360.5" width="2" height="7"/><rect x="1155.5" y="338.5" width="2" height="25"/><rect x="1159.5" y="329.5" width="2" height="22"/><rect x="1163.5" y="276.5" width="2" height="14"/><rect x="1167.5" y="255.5" width="2" height="24"/><rect x="1175.5" y="243.5" width="2" height="18"/><rect x="1183.5" y="209.5" width="2" height="22"/><rect x="1187.5" y="202.5" width="2" height="11"/><rect x="1191.5" y="195.5" width="2" height="19"/><rect x="1199.5" y="183.5" width="2" height="20"/><rect x="1207.5" y="217.5" width="2" height="4"/><rect x="1211.5" y="221.5" width="2" height="3"/><rect x="1215.5" y="223.5" width="2" height="7"/><rect x="1219.5" y="226.5" width="2" height="1"/><rect x="1223.5" y="224.5" width="2" height="6"/><rect x="1227.5" y="214.5" width="2" height="6"/><rect x="1231.5" y="221.5" width="2" height="6"/><rect x="1235.5" y="200.5" width="2" height="11"/><rect x="1243.5" y="200.5" width="2" height="1"/><rect x="1247.5" y="198.5" width="2" height="14"/><rect x="1251.5" y="185.5" width="2" height="10"/><rect x="1255.5" y="152.5" width="2" height="32"/><rect x="1263.5" y="147.5" width="2" height="10"/><rect x="1267.5" y="162.5" width="2" height="9"/><rect x="1271.5" y="145.5" width="2" height="10"/><rect x="1283.5" y="168.5" width="2" height="24"/><rect x="1291.5" y="188.5" width="2" height="14"/><rect x="1299.5" y="211.5" width="2" height="8"/></g><g fill="#a4f8a4" stroke="#2fe62f"><rect x="195.5" y="385.5" width="2" height="13"/><rect x="199.5" y="391.5" width="2" height="11"/><rect x="203.5" y="391.5" width="2" height="16"/><rect x="215.5" y="395.5" width="2" height="17"/><rect x="219.5" y="425.5" width="2" height="13"/><rect x="223.5" y="437.5" width="2" height="17"/><rect x="235.5" y="455.5" width="2" height="11"/><rect x="239.5" y="468.5" width="2" height="6"/><rect x="243.5" y="479.5" width="2" height="4"/><rect x="251.5" y="476.5" width="2" height="6"/><rect x="259.5" y="477.5" width="2" height="4"/><rect x="263.5" y="476.5" width="2" height="6"/><rect x="267.5" y="480.5" width="2" height="19"/><rect x="275.5" y="489.5" width="2" height="8"/><rect x="283.5" y="476.5" width="2" height="10"/><rect x="299.5" y="452.5" width="2" height="20"/><rect x="311.5" y="446.5" width="2" height="10"/><rect x="319.5" y="414.5" width="2" height="35"/><rect x="335.5" y="338.5" width="2" height="7"/><rect x="339.5" y="352.5" width="2" height="5"/><rect x="343.5" y="350.5" width="2" height="6"/><rect x="347.5" y="364.5" width="2" height="4"/><rect x="379.5" y="348.5" width="2" height="3"/><rect x="387.5" y="341.5" width="2" height="10"/><rect x="391.5" y="354.5" width="2" height="16"/><rect x="411.5" y="360.5" width="2" height="23"/><rect x="423.5" y="369.5" width="2" height="13"/><rect x="427.5" y="370.5" width="2" height="5"/><rect x="439.5" y="356.5" width="2" height="9"/><rect x="447.5" y="370.5" width="2" height="10"/><rect x="455.5" y="367.5" width="2" height="3"/><rect x="467.5" y="354.5" width="2" height="4"/><rect x="471.5" y="342.5" width="2" height="10"/><rect x="475.5" y="328.5" width="2" height="6"/><rect x="479.5" y="302.5" width="2" height="19"/><rect x="495.5" y="336.5" width="2" height="13"/><rect x="499.5" y="341.5" width="2" height="15"/><rect x="503.5" y="324.5" width="2" height="23"/><rect x="515.5" y="295.5" width="2" height="40"/><rect x="523.5" y="381.5" width="2" height="8"/><rect x="527.5" y="376.5" width="2" height="7"/><rect x="531.5" y="371.5" width="2" height="3"/><rect x="535.5" y="379.5" width="2" height="6"/><rect x="539.5" y="376.5" width="2" height="9"/><rect x="551.5" y="372.5" width="2" height="4"/><rect x="563.5" y="406.5" width="2" height="9"/><rect x="571.5" y="408.5" width="2" height="3"/><rect x="575.5" y="400.5" width="2" height="15"/><rect x="587.5" y="361.5" width="2" height="12"/><rect x="591.5" y="375.5" width="2" height="12"/><rect x="611.5" y="310.5" width="2" height="19"/><rect x="623.5" y="324.5" width="2" height="3"/><rect x="627.5" y="327.5" width="2" height="3"/><rect x="635.5" y="345.5" width="2" height="3"/><rect x="639.5" y="347.5" width="2" height="4"/><rect x="659.5" y="339.5" width="2" height="4"/><rect x="691.5" y="300.5" width="2" height="7"/><rect x="695.5" y="304.5" width="2" height="6"/><rect x="699.5" y="306.5" width="2" height="12"/><rect x="707.5" y="240.5" width="2" height="30"/><rect x="711.5" y="233.5" width="2" height="13"/><rect x="719.5" y="228.5" width="2" height="9"/><rect x="727.5" y="224.5" width="2" height="4"/><rect x="731.5" y="226.5" width="2" height="3"/><rect x="735.5" y="227.5" width="2" height="4"/><rect x="755.5" y="210.5" width="2" height="6"/><rect x="759.5" y="223.5" width="2" height="5"/><rect x="763.5" y="225.5" width="2" height="5"/><rect x="767.5" y="226.5" width="2" height="4"/><rect x="771.5" y="230.5" width="2" height="5"/><rect x="779.5" y="225.5" width="2" height="16"/><rect x="795.5" y="193.5" width="2" height="49"/><rect x="799.5" y="194.5" width="2" height="17"/><rect x="807.5" y="166.5" width="2" height="16"/><rect x="819.5" y="128.5" width="2" height="15"/><rect x="823.5" y="154.5" width="2" height="17"/><rect x="827.5" y="184.5" width="2" height="6"/><rect x="839.5" y="179.5" width="2" height="3"/><rect x="851.5" y="187.5" width="2" height="6"/><rect x="855.5" y="191.5" width="2" height="6"/><rect x="859.5" y="200.5" width="2" height="8"/><rect x="867.5" y="199.5" width="2" height="7"/><rect x="871.5" y="207.5" width="2" height="11"/><rect x="875.5" y="211.5" width="2" height="9"/><rect x="879.5" y="212.5" width="2" height="16"/><rect x="883.5" y="215.5" width="2" height="9"/><rect x="891.5" y="209.5" width="2" height="6"/><rect x="899.5" y="241.5" width="2" height="13"/><rect x="907.5" y="232.5" width="2" height="7"/><rect x="911.5" y="227.5" width="2" height="8"/><rect x="923.5" y="226.5" width="2" height="6"/><rect x="927.5" y="228.5" width="2" height="12"/><rect x="931.5" y="225.5" width="2" height="7"/><rect x="939.5" y="201.5" width="2" height="14"/><rect x="947.5" y="194.5" width="2" height="6"/><rect x="955.5" y="201.5" width="2" height="11"/><rect x="967.5" y="206.5" width="2" height="23"/><rect x="975.5" y="249.5" width="2" height="11"/><rect x="983.5" y="321.5" width="2" height="21"/><rect x="987.5" y="324.5" width="2" height="15"/><rect x="995.5" y="304.5" width="2" height="23"/><rect x="999.5" y="314.5" width="2" height="15"/><rect x="1003.5" y="307.5" width="2" height="8"/><rect x="1011.5" y="306.5" width="2" height="5"/><rect x="1015.5" y="321.5" width="2" height="8"/><rect x="1019.5" y="321.5" width="2" height="3"/><rect x="1027.5" y="318.5" width="2" height="2"/><rect x="1031.5" y="321.5" width="2" height="7"/><rect x="1035.5" y="319.5" width="2" height="10"/><rect x="1047.5" y="327.5" width="2" height="4"/><rect x="1055.5" y="337.5" width="2" height="13"/><rect x="1063.5" y="339.5" width="2" height="12"/><rect x="1067.5" y="364.5" width="2" height="16"/><rect x="1071.5" y="358.5" width="2" height="15"/><rect x="1079.5" y="347.5" width="2" height="14"/><rect x="1083.5" y="338.5" width="2" height="10"/><rect x="1087.5" y="362.5" width="2" height="17"/><rect x="1091.5" y="378.5" width="2" height="27"/><rect x="1107.5" y="323.5" width="2" height="5"/><rect x="1111.5" y="331.5" width="2" height="12"/><rect x="1115.5" y="340.5" width="2" height="4"/><rect x="1119.5" y="345.5" width="2" height="12"/><rect x="1127.5" y="346.5" width="2" height="6"/><rect x="1131.5" y="359.5" width="2" height="5"/><rect x="1135.5" y="358.5" width="2" height="5"/><rect x="1139.5" y="348.5" width="2" height="6"/><rect x="1143.5" y="351.5" width="2" height="5"/><rect x="1147.5" y="358.5" width="2" height="16"/><rect x="1171.5" y="257.5" width="2" height="15"/><rect x="1179.5" y="231.5" width="2" height="13"/><rect x="1195.5" y="187.5" width="2" height="9"/><rect x="1203.5" y="207.5" width="2" height="9"/><rect x="1239.5" y="199.5" width="2" height="6"/><rect x="1259.5" y="142.5" width="2" height="14"/><rect x="1275.5" y="132.5" width="2" height="7"/><rect x="1279.5" y="157.5" width="2" height="12"/><rect x="1287.5" y="193.5" width="2" height="9"/><rect x="1295.5" y="195.5" width="2" height="15"/><rect x="1303.5" y="218.5" width="2" height="11"/><rect x="1307.5" y="237.5" width="2" height="5"/><rect x="192" y="372.500" width="1.500" height="5"/></g><polyline points="190.7,470.2 265.1,470.2 272.1,474.2 278.0,477.2 281.5,480.8 283.8,492.5 430.0,492.5 448.3,492.3 457.0,484.0 467.7,472.0 474.7,456.0 480.8,440.0 484.7,424.9 490.5,405.3 496.4,393.6 504.2,387.8 512.0,386.2 540.0,386.2 555.4,386.5 565.2,388.5 573.0,391.4 577.9,395.3 580.8,400.2 730.0,400.2 743.0,400.4 751.9,394.5 760.7,382.0 767.7,364.5 774.8,347.0 785.4,337.0 799.4,333.5 831.0,332.0 841.7,325.8 859.3,315.2 862.8,301.0 864.2,289.9 867.7,260.1 871.3,253.1 878.3,246.1 887.7,239.0 894.7,234.8 940.0,233.9 983.3,233.1 988.0,237.8 995.1,247.2 998.6,267.1 1000.9,288.2 1004.5,300.0 1010.3,307.0 1018.5,312.9 1030.3,316.4 1046.7,318.3 1060.8,322.2 1070.1,328.1 1073.7,337.5 1076.0,349.2 1081.9,353.9 1088.9,359.8 1098.3,363.3 1130.0,363.1 1264.9,363.1 1267.8,360.1 1271.7,346.4 1275.7,343.5 1280.5,330.8 1286.4,324.9 1292.3,321.0 1296.2,319.1 1300.1,310.3 1302.0,308.9 1307.9,308.9" fill="none" stroke="#30d830" stroke-width="1" shape-rendering="crispEdges"/><polyline points="190.7,401.5 211.1,398.7 225.2,399.1 234.6,400.5 244.0,405.7 253.3,410.4 262.7,415.1 268.6,422.1 274.5,426.8 280.3,428.7 293.2,432.0 302.6,434.5 312.0,436.7" fill="none" stroke="#dca868" stroke-width="1" stroke-dasharray="2 3" shape-rendering="crispEdges"/><polyline points="326.1,428.0 340.1,423.3 354.2,419.8 368.3,415.5 384.7,409.9 401.1,405.2 412.9,402.9 418.2,402.4 433.8,400.5 449.5,398.5 452.4,392.6 457.3,390.7 465.1,388.7 474.9,386.8 478.8,383.8 480.8,368.2 484.7,358.4 494.4,356.5 496.4,344.7 500.3,335.0 508.1,332.0 516.0,328.1 527.7,327.1 540.0,328.1 541.7,328.9 553.5,332.8 565.2,337.7 576.9,342.6 588.7,346.5 598.4,348.8 608.2,349.8 614.1,350.0 631.7,348.8 647.3,347.4 666.9,345.5 686.4,344.1 692.3,343.5 695.2,348.4 701.1,346.5 704.0,330.8 706.0,313.2 713.8,309.3 721.6,303.5 730.0,298.6 744.6,289.9 756.3,276.6 770.4,267.2 784.5,256.6 792.7,243.7 796.2,227.3 803.2,220.3 812.6,208.5 818.5,192.1 826.7,188.6 831.4,187.4 850.1,185.5 864.2,182.7 872.4,185.1 880.6,186.2 885.3,175.7 890.0,168.7 897.1,169.8 911.1,174.5 925.2,179.2 940.0,182.7 948.2,185.0 966.9,188.5 974.0,194.4 978.7,206.1 982.2,220.2 984.5,233.1 990.4,235.4 995.1,240.1 999.8,253.0 1003.3,260.1 1013.8,267.1 1023.2,275.3 1037.3,280.0 1046.7,282.4 1054.9,284.7 1058.4,292.9 1065.5,302.3 1074.8,309.3 1087.7,312.9 1089.4,330.5 1092.4,341.0 1098.3,344.5 1107.7,345.7 1119.4,344.5 1140.5,342.2 1141.7,342.5 1147.6,350.3 1153.5,360.1 1159.3,371.9 1162.3,369.9 1166.2,360.1 1172.0,350.3 1178.9,336.7 1186.7,321.0 1194.5,311.2 1200.4,304.4 1208.2,299.5 1218.0,295.6 1227.8,291.7 1237.5,288.8 1247.3,285.8 1252.2,277.0 1256.1,264.3 1261.0,255.5 1266.9,251.6 1272.7,237.9 1275.7,226.4 1280.5,222.5 1290.3,220.6 1300.1,217.6 1306.9,215.7" fill="none" stroke="#dca868" stroke-width="1" stroke-dasharray="2 3" shape-rendering="crispEdges"/><polyline points="192.0,369.3 340.0,369.2 359.6,368.2 363.5,365.3 369.3,361.4 379.1,359.4 398.7,358.4 480.8,358.0 488.6,355.5 494.4,350.6 498.4,340.8 502.3,333.0 510.1,330.1 516.0,328.7 540.0,328.7 541.7,328.3 696.2,326.5 700.1,324.0 706.0,321.1 713.8,317.1 716.7,314.2 718.7,299.6 720.6,280.0 720.6,289.9 722.3,269.5 724.6,255.5 731.7,247.2 738.7,237.9 746.9,234.3 758.7,230.8 765.7,225.0 777.4,225.0 793.8,224.5 803.2,220.3 806.7,217.9 811.4,208.5 816.1,199.1 819.6,191.6 826.7,188.6 830.2,175.7 833.7,167.0 940.0,167.0 992.6,166.8 996.3,171.3 1001.9,180.7 1004.5,185.0 1010.3,196.7 1016.2,203.8 1024.4,208.5 1037.3,210.1 1134.7,210.8 1137.0,215.5 1140.5,243.7 1142.9,264.8 1144.8,278.8 1145.6,280.0 1151.5,282.9 1157.4,286.8 1161.3,292.7 1164.2,297.6 1168.1,298.5 1172.0,292.7 1175.9,285.8 1180.8,282.9 1187.7,280.9 1191.6,270.2 1196.5,252.6 1201.4,235.0 1203.3,228.4 1208.2,208.8 1211.1,202.0 1214.1,200.4 1255.1,200.4 1259.0,197.1 1264.9,195.2 1270.8,189.3 1274.7,181.5 1277.6,171.7 1284.4,164.9 1288.4,160.9 1306.9,160.9" fill="none" stroke="#d42222" stroke-width="1" shape-rendering="crispEdges"/><polyline points="190.7,443.9 209.9,443.9" fill="none" stroke="#fff" stroke-width="1" shape-rendering="crispEdges"/><polyline points="215.8,444.4 220.5,443.2 226.4,438.5 231.1,433.8" fill="none" stroke="#fff" stroke-width="1" shape-rendering="crispEdges"/><polyline points="234.6,428.4 253.3,428.4" fill="none" stroke="#fff" stroke-width="1" shape-rendering="crispEdges"/><polyline points="258.0,428.4 278.0,428.4" fill="none" stroke="#fff" stroke-width="1" shape-rendering="crispEdges"/><polyline points="282.7,428.4 302.6,428.4" fill="none" stroke="#fff" stroke-width="1" shape-rendering="crispEdges"/><polyline points="307.3,428.4 326.1,428.4" fill="none" stroke="#fff" stroke-width="1" shape-rendering="crispEdges"/><polyline points="330.8,428.4 349.5,428.4" fill="none" stroke="#fff" stroke-width="1" shape-rendering="crispEdges"/><polyline points="340.0,427.8 348.8,427.8" fill="none" stroke="#fff" stroke-width="1" shape-rendering="crispEdges"/><polyline points="354.7,427.8 371.3,427.8" fill="none" stroke="#fff" stroke-width="1" shape-rendering="crispEdges"/><polyline points="379.1,427.8 396.7,427.8" fill="none" stroke="#fff" stroke-width="1" shape-rendering="crispEdges"/><polyline points="402.6,427.8 413.3,427.8 415.3,420.0" fill="none" stroke="#fff" stroke-width="1" shape-rendering="crispEdges"/><polyline points="416.8,411.2 418.2,405.3 421.1,398.5 424.1,395.6" fill="none" stroke="#fff" stroke-width="1" shape-rendering="crispEdges"/><polyline points="426.0,385.8 428.0,383.5 439.7,383.5" fill="none" stroke="#fff" stroke-width="1" shape-rendering="crispEdges"/><polyline points="445.6,384.2 465.1,383.8" fill="none" stroke="#fff" stroke-width="1" shape-rendering="crispEdges"/><polyline points="469.0,382.3 471.0,381.9 476.9,378.0 484.7,376.0 487.6,376.0" fill="none" stroke="#fff" stroke-width="1" shape-rendering="crispEdges"/><polyline points="494.4,373.1 498.4,368.2 504.2,366.2 510.1,363.3" fill="none" stroke="#fff" stroke-width="1" shape-rendering="crispEdges"/><polyline points="516.9,360.8 522.8,359.4 533.5,358.8" fill="none" stroke="#fff" stroke-width="1" shape-rendering="crispEdges"/><polyline points="530.0,359.2 541.7,359.2 557.4,361.1" fill="none" stroke="#fff" stroke-width="1" shape-rendering="crispEdges"/><polyline points="563.2,365.4 569.1,369.9 576.9,375.8 578.9,376.8" fill="none" stroke="#fff" stroke-width="1" shape-rendering="crispEdges"/><polyline points="586.7,377.8 592.6,379.7 596.5,381.7 603.3,383.0" fill="none" stroke="#fff" stroke-width="1" shape-rendering="crispEdges"/><polyline points="610.2,380.7 614.1,377.8 621.9,376.8 626.8,373.8" fill="none" stroke="#fff" stroke-width="1" shape-rendering="crispEdges"/><polyline points="631.7,367.0 636.5,361.1 641.4,358.2 646.3,355.3" fill="none" stroke="#fff" stroke-width="1" shape-rendering="crispEdges"/><polyline points="652.2,348.8 669.8,348.8" fill="none" stroke="#fff" stroke-width="1" shape-rendering="crispEdges"/><polyline points="676.6,349.4 694.2,349.4" fill="none" stroke="#fff" stroke-width="1" shape-rendering="crispEdges"/><polyline points="696.2,349.4 705.0,348.8 709.9,343.5 716.7,336.7" fill="none" stroke="#fff" stroke-width="1" shape-rendering="crispEdges"/><polyline points="723.5,335.7 730.0,335.7" fill="none" stroke="#fff" stroke-width="1" shape-rendering="crispEdges"/><polyline points="724.0,335.2 742.0,332.3" fill="none" stroke="#fff" stroke-width="1" shape-rendering="crispEdges"/><polyline points="747.0,331.3 764.0,328.2" fill="none" stroke="#fff" stroke-width="1" shape-rendering="crispEdges"/><polyline points="770.0,324.0 780.0,321.0" fill="none" stroke="#fff" stroke-width="1" shape-rendering="crispEdges"/><polyline points="783.0,319.5 790.0,316.0 792.3,300.0" fill="none" stroke="#fff" stroke-width="1" shape-rendering="crispEdges"/><polyline points="793.4,283.6 795.0,267.2 797.4,255.5" fill="none" stroke="#fff" stroke-width="1" shape-rendering="crispEdges"/><polyline points="798.5,251.9 806.7,246.1" fill="none" stroke="#fff" stroke-width="1" shape-rendering="crispEdges"/><polyline points="810.3,239.0 815.0,236.7 825.5,235.5" fill="none" stroke="#fff" stroke-width="1" shape-rendering="crispEdges"/><polyline points="832.6,233.2 840.8,230.8 850.1,228.9" fill="none" stroke="#fff" stroke-width="1" shape-rendering="crispEdges"/><polyline points="857.2,226.6 874.8,226.6" fill="none" stroke="#fff" stroke-width="1" shape-rendering="crispEdges"/><polyline points="881.8,225.0 890.0,223.8 898.2,222.1" fill="none" stroke="#fff" stroke-width="1" shape-rendering="crispEdges"/><polyline points="905.3,220.7 921.7,220.7" fill="none" stroke="#fff" stroke-width="1" shape-rendering="crispEdges"/><polyline points="929.4,221.8 941.1,223.7 943.5,222.5" fill="none" stroke="#fff" stroke-width="1" shape-rendering="crispEdges"/><polyline points="955.2,221.4 961.1,216.7 969.3,213.6 978.7,214.3 988.0,217.8 993.9,221.4" fill="none" stroke="#fff" stroke-width="1" shape-rendering="crispEdges"/><polyline points="1000.9,222.5 1008.0,226.1 1018.5,227.2" fill="none" stroke="#fff" stroke-width="1" shape-rendering="crispEdges"/><polyline points="1024.4,228.4 1032.6,230.0 1042.0,231.9" fill="none" stroke="#fff" stroke-width="1" shape-rendering="crispEdges"/><polyline points="1049.0,233.1 1060.8,233.6 1065.5,235.4" fill="none" stroke="#fff" stroke-width="1" shape-rendering="crispEdges"/><polyline points="1067.3,243.7 1069.0,255.4 1070.1,271.8 1071.3,283.5" fill="none" stroke="#fff" stroke-width="1" shape-rendering="crispEdges"/><polyline points="1073.7,291.7 1076.0,298.8 1079.5,304.6 1083.0,307.5" fill="none" stroke="#fff" stroke-width="1" shape-rendering="crispEdges"/><polyline points="1088.9,313.6 1098.3,315.7 1106.5,316.4" fill="none" stroke="#fff" stroke-width="1" shape-rendering="crispEdges"/><polyline points="1113.5,318.3 1130.0,319.2 1140.5,319.7" fill="none" stroke="#fff" stroke-width="1" shape-rendering="crispEdges"/><polyline points="1137.8,319.5 1154.4,319.5" fill="none" stroke="#fff" stroke-width="1" shape-rendering="crispEdges"/><polyline points="1162.3,321.0 1179.9,321.0" fill="none" stroke="#fff" stroke-width="1" shape-rendering="crispEdges"/><polyline points="1185.7,321.0 1203.3,321.4" fill="none" stroke="#fff" stroke-width="1" shape-rendering="crispEdges"/><polyline points="1209.2,321.0 1221.9,321.0 1224.8,319.1" fill="none" stroke="#fff" stroke-width="1" shape-rendering="crispEdges"/><polyline points="1227.8,310.3 1231.7,308.3 1235.6,301.5 1239.5,298.5" fill="none" stroke="#fff" stroke-width="1" shape-rendering="crispEdges"/><polyline points="1245.3,291.7 1249.3,284.9 1255.1,281.9 1259.0,280.9" fill="none" stroke="#fff" stroke-width="1" shape-rendering="crispEdges"/><polyline points="1262.0,275.1 1264.9,264.3 1267.8,258.5" fill="none" stroke="#fff" stroke-width="1" shape-rendering="crispEdges"/><polyline points="1269.8,248.7 1273.7,237.0" fill="none" stroke="#fff" stroke-width="1" shape-rendering="crispEdges"/><polyline points="1273.7,233.3 1275.7,226.4 1278.6,223.5 1281.5,222.9" fill="none" stroke="#fff" stroke-width="1" shape-rendering="crispEdges"/><polyline points="1284.4,222.1 1290.3,220.6" fill="none" stroke="#fff" stroke-width="1" shape-rendering="crispEdges"/><polyline points="1293.2,219.0 1298.1,217.6" fill="none" stroke="#fff" stroke-width="1" shape-rendering="crispEdges"/><polyline points="1301.1,216.3 1306.9,215.1" fill="none" stroke="#fff" stroke-width="1" shape-rendering="crispEdges"/><polyline points="192.3,370.0 199.4,375.2 212.3,386.9 219.3,395.1 225.2,406.9 232.2,420.9 238.1,433.8 244.0,449.1 248.7,460.8 253.3,469.0 259.2,475.6 265.1,478.4 267.4,494.8 270.9,499.5 276.8,498.4 283.8,492.5 290.9,486.6 297.9,481.5 302.6,480.3 308.5,473.7 314.3,462.0 320.2,444.4 324.9,428.0 330.8,408.0 337.8,388.1 340.0,381.9 343.9,374.1 347.8,368.2 351.7,363.3 356.6,360.4 363.5,358.8 371.3,358.4 379.1,358.4 386.9,356.5 391.8,354.1 396.7,354.5 402.6,358.4 408.4,363.3 413.3,370.2 418.2,375.0 424.1,379.0 428.0,382.9 433.8,383.8 439.7,385.8 444.6,389.7 448.5,392.6 452.4,388.7 457.3,385.8 465.1,383.8 470.0,381.9 474.9,377.0 477.8,368.2 479.8,348.7 482.7,335.9 486.6,329.1 489.6,328.1 493.5,331.1 497.4,332.6 501.3,330.1 504.2,324.2 507.2,321.9 511.1,323.2 516.0,325.2 518.9,327.1 522.8,336.9 527.7,344.7 530.0,350.4 535.9,355.3 541.7,366.0 547.6,377.8 555.4,386.5 563.2,395.3 569.1,402.2 573.4,405.1 578.9,403.2 586.7,399.3 592.6,395.3 598.4,388.5 603.3,380.7 608.2,369.0 612.1,358.2 617.0,347.4 623.8,339.6 631.7,332.8 636.5,329.9 640.5,328.9 645.3,329.9 651.2,332.8 657.1,334.7 666.9,336.3 672.7,332.4 678.6,328.9 684.4,322.0 689.3,317.1 692.3,315.8 696.2,320.1 700.1,321.1 701.9,297.7 704.0,289.9 705.9,269.5 708.2,255.5 714.1,249.6 719.9,241.4 724.6,236.7 735.2,233.2 743.4,229.6 748.1,222.6 754.0,219.6 759.8,222.6 764.5,226.1 770.4,227.3 780.9,228.0 785.6,229.6 790.3,234.3 792.7,227.3 795.0,213.2 797.4,205.0 803.2,198.0 809.1,190.9 812.6,185.1 815.0,166.3 817.3,154.6 820.1,152.9 824.3,158.1 830.2,167.5 836.1,173.3 840.8,179.2 845.5,188.6 850.1,198.0 853.7,210.9 857.2,222.6 861.9,227.3 868.9,232.0 874.8,237.9 880.2,242.6 883.0,232.0 886.5,215.6 889.6,210.9 893.5,213.2 899.4,219.1 906.5,225.0 913.5,227.3 919.4,228.9 920.0,230.7 929.4,234.3 936.4,231.9 943.5,222.5 950.5,214.3 957.5,209.6 965.7,202.6 968.6,201.0 972.8,209.6 976.3,214.3 978.7,231.9 981.0,255.4 983.3,283.5 986.9,297.6 992.7,305.8 999.8,313.6 1000.0,314.4 1007.8,316.4 1017.6,316.4 1025.4,315.0 1033.2,318.3 1041.1,320.3 1048.9,323.2 1054.7,327.1 1057.7,335.0 1060.6,348.7 1064.5,355.5 1070.4,361.4 1078.2,362.9 1086.0,362.9 1089.0,363.3 1089.9,378.0 1091.5,395.6 1092.9,402.4 1095.8,396.5 1099.7,385.8 1105.6,368.2 1111.4,350.6 1117.3,332.0 1123.2,314.4 1129.0,296.8 1130.0,291.7 1132.9,283.9 1137.8,280.9 1142.7,281.9 1145.6,289.7 1148.6,303.4 1152.5,317.1 1156.4,326.9 1159.3,336.7 1160.7,344.5 1162.3,332.8 1165.2,311.2 1169.1,295.6 1174.0,276.1 1177.9,260.4 1181.8,244.8 1182.8,236.2 1186.7,220.6 1191.6,207.9 1195.5,196.1 1199.4,191.8 1204.3,195.2 1212.1,201.0 1219.9,208.8 1227.8,216.7 1235.6,223.5 1242.4,224.5 1247.3,223.5 1252.2,218.6 1253.6,206.9 1256.1,183.4 1260.0,171.7 1266.9,165.8 1272.7,155.1 1276.6,149.2 1280.5,149.8 1285.4,155.1 1290.3,163.9 1296.2,177.6 1300.1,189.3 1304.0,206.9 1306.9,222.5 1308.3,230.3" fill="none" stroke="#30b2f2" stroke-width="1.900" stroke-linejoin="round"/><path d="M195 108h7l-3.500 4z" fill="#fff"/><rect x="1320" y="231" width="41" height="11" fill="#fff"/></svg><span class="t" style="left:207.00px;top:104.96px;font-size:9.5px;line-height:9.5px;letter-spacing:-0.106px;color:#fff;white-space:pre;">GBPUSD,H1  1.38324 1.38355 1.38259 1.38306</span><span class="t" style="left:1324.50px;top:122.56px;font-size:9.5px;line-height:9.5px;letter-spacing:-0.263px;color:#fff;">1.38895</span><span class="t" style="left:1324.50px;top:155.56px;font-size:9.5px;line-height:9.5px;letter-spacing:-0.263px;color:#fff;">1.38720</span><span class="t" style="left:1324.50px;top:188.56px;font-size:9.5px;line-height:9.5px;letter-spacing:-0.263px;color:#fff;">1.38540</span><span class="t" style="left:1324.50px;top:221.56px;font-size:9.5px;line-height:9.5px;letter-spacing:-0.263px;color:#fff;">1.38360</span><span class="t" style="left:1324.50px;top:254.56px;font-size:9.5px;line-height:9.5px;letter-spacing:-0.263px;color:#fff;">1.38185</span><span class="t" style="left:1324.50px;top:287.56px;font-size:9.5px;line-height:9.5px;letter-spacing:-0.263px;color:#fff;">1.38005</span><span class="t" style="left:1324.50px;top:320.56px;font-size:9.5px;line-height:9.5px;letter-spacing:-0.263px;color:#fff;">1.37825</span><span class="t" style="left:1324.50px;top:353.56px;font-size:9.5px;line-height:9.5px;letter-spacing:-0.263px;color:#fff;">1.37645</span><span class="t" style="left:1324.50px;top:386.56px;font-size:9.5px;line-height:9.5px;letter-spacing:-0.263px;color:#fff;">1.37470</span><span class="t" style="left:1324.50px;top:419.56px;font-size:9.5px;line-height:9.5px;letter-spacing:-0.263px;color:#fff;">1.37290</span><span class="t" style="left:1324.50px;top:452.56px;font-size:9.5px;line-height:9.5px;letter-spacing:-0.162px;color:#fff;">1.37110</span><span class="t" style="left:1324.50px;top:485.56px;font-size:9.5px;line-height:9.5px;letter-spacing:-0.263px;color:#fff;">1.36930</span><span class="t" style="left:1324.50px;top:518.56px;font-size:9.5px;line-height:9.5px;letter-spacing:-0.263px;color:#fff;">1.36755</span><span class="t" style="left:1324.50px;top:231.96px;font-size:9.5px;line-height:9.5px;letter-spacing:-0.263px;">1.38306</span><span class="t" style="left:191.60px;top:530.96px;font-size:9.5px;line-height:9.5px;letter-spacing:-0.100px;color:#fff;white-space:pre;">26 Aug 2021</span><span class="t" style="left:255.60px;top:530.96px;font-size:9.5px;line-height:9.5px;letter-spacing:-0.100px;color:#fff;white-space:pre;">27 Aug 00:00</span><span class="t" style="left:319.60px;top:530.96px;font-size:9.5px;line-height:9.5px;letter-spacing:-0.100px;color:#fff;white-space:pre;">27 Aug 16:00</span><span class="t" style="left:383.60px;top:530.96px;font-size:9.5px;line-height:9.5px;letter-spacing:-0.100px;color:#fff;white-space:pre;">30 Aug 08:00</span><span class="t" style="left:447.60px;top:530.96px;font-size:9.5px;line-height:9.5px;letter-spacing:-0.100px;color:#fff;white-space:pre;">31 Aug 00:00</span><span class="t" style="left:511.60px;top:530.96px;font-size:9.5px;line-height:9.5px;letter-spacing:-0.100px;color:#fff;white-space:pre;">31 Aug 16:00</span><span class="t" style="left:575.60px;top:530.96px;font-size:9.5px;line-height:9.5px;letter-spacing:-0.100px;color:#fff;white-space:pre;">1 Sep 08:00</span><span class="t" style="left:639.60px;top:530.96px;font-size:9.5px;line-height:9.5px;letter-spacing:-0.100px;color:#fff;white-space:pre;">2 Sep 00:00</span><span class="t" style="left:703.60px;top:530.96px;font-size:9.5px;line-height:9.5px;letter-spacing:-0.100px;color:#fff;white-space:pre;">2 Sep 16:00</span><span class="t" style="left:767.60px;top:530.96px;font-size:9.5px;line-height:9.5px;letter-spacing:-0.100px;color:#fff;white-space:pre;">3 Sep 08:00</span><span class="t" style="left:831.60px;top:530.96px;font-size:9.5px;line-height:9.5px;letter-spacing:-0.100px;color:#fff;white-space:pre;">6 Sep 00:00</span><span class="t" style="left:895.60px;top:530.96px;font-size:9.5px;line-height:9.5px;letter-spacing:-0.100px;color:#fff;white-space:pre;">6 Sep 16:00</span><span class="t" style="left:959.60px;top:530.96px;font-size:9.5px;line-height:9.5px;letter-spacing:-0.100px;color:#fff;white-space:pre;">7 Sep 08:00</span><span class="t" style="left:1023.60px;top:530.96px;font-size:9.5px;line-height:9.5px;letter-spacing:-0.100px;color:#fff;white-space:pre;">8 Sep 00:00</span><span class="t" style="left:1087.60px;top:530.96px;font-size:9.5px;line-height:9.5px;letter-spacing:-0.100px;color:#fff;white-space:pre;">8 Sep 16:00</span><span class="t" style="left:1151.60px;top:530.96px;font-size:9.5px;line-height:9.5px;letter-spacing:-0.100px;color:#fff;white-space:pre;">9 Sep 08:00</span><span class="t" style="left:1215.60px;top:530.96px;font-size:9.5px;line-height:9.5px;letter-spacing:-0.100px;color:#fff;white-space:pre;">10 Sep 00:00</span><span class="t" style="left:1279.60px;top:530.96px;font-size:9.5px;line-height:9.5px;letter-spacing:-0.100px;color:#fff;white-space:pre;">10 Sep 16:00</span>
<div style="position:absolute;left:0px;top:98px;width:188px;height:235px;background:#f0f0f0;"></div>
<div style="position:absolute;left:3px;top:100px;width:167px;height:14px;background:linear-gradient(90deg,#c2d2e6,#dbe6f2);"></div>
<span class="t" style="left:5.00px;top:101.09px;font-size:11px;line-height:11px;letter-spacing:0.119px;">Market Watch: 23:58:59</span>
<svg style="position:absolute;left:174px;top:102px;" width="8" height="8" viewBox="0 0 8 8"><path d="M1.300 1.500l5.400 5.400M6.700 1.500l-5.400 5.400" stroke="#000" stroke-width="1.700"/></svg>
<div style="position:absolute;left:3px;top:114px;width:182px;height:194px;background:#fff;border-left:1px solid #a0a0a0;border-top:1px solid #a0a0a0;box-sizing:border-box;overflow:hidden;"></div>
<span class="t" style="left:10.00px;top:121.09px;font-size:12.3px;line-height:12.3px;letter-spacing:-0.253px;">Symbol</span>
<span class="t" style="left:96.00px;top:121.09px;font-size:12.3px;line-height:12.3px;letter-spacing:-0.093px;">Bid</span>
<span class="t" style="left:141.00px;top:121.09px;font-size:12.3px;line-height:12.3px;letter-spacing:-0.335px;">Ask</span>
<div style="position:absolute;left:4px;top:139px;width:163px;height:20px;background:#b4fbb4;overflow:hidden;"></div>
<span class="t" style="left:24.50px;top:142.59px;font-size:12.3px;line-height:12.3px;letter-spacing:-0.954px;">USD...</span><span class="t" style="left:86.00px;top:142.59px;font-size:12.3px;line-height:12.3px;letter-spacing:-0.670px;color:#1a3ad0;">0.91...</span><span class="t" style="left:132.50px;top:142.59px;font-size:12.3px;line-height:12.3px;letter-spacing:-0.670px;color:#1a3ad0;">0.91...</span>
<div style="position:absolute;left:4px;top:159px;width:163px;height:20px;background:#b4fbb4;overflow:hidden;"></div>
<span class="t" style="left:24.50px;top:162.59px;font-size:12.3px;line-height:12.3px;letter-spacing:-0.690px;">GBP...</span><span class="t" style="left:86.00px;top:162.59px;font-size:12.3px;line-height:12.3px;letter-spacing:-0.670px;color:#e0301a;">1.38...</span><span class="t" style="left:132.50px;top:162.59px;font-size:12.3px;line-height:12.3px;letter-spacing:-0.670px;color:#e0301a;">1.38...</span>
<div style="position:absolute;left:4px;top:179px;width:163px;height:20px;background:#b4fbb4;overflow:hidden;"></div>
<span class="t" style="left:24.50px;top:182.59px;font-size:12.3px;line-height:12.3px;letter-spacing:-0.954px;">EUR...</span><span class="t" style="left:86.00px;top:182.59px;font-size:12.3px;line-height:12.3px;letter-spacing:-0.670px;color:#1a3ad0;">1.18...</span><span class="t" style="left:132.50px;top:182.59px;font-size:12.3px;line-height:12.3px;letter-spacing:-0.670px;color:#1a3ad0;">1.18...</span>
<div style="position:absolute;left:4px;top:199px;width:163px;height:20px;background:#b4fbb4;overflow:hidden;"></div>
<span class="t" style="left:24.50px;top:202.59px;font-size:12.3px;line-height:12.3px;letter-spacing:-1.422px;">USDJPY</span><span class="t" style="left:86.00px;top:202.59px;font-size:12.3px;line-height:12.3px;letter-spacing:-0.599px;color:#1a3ad0;">109....</span><span class="t" style="left:132.50px;top:202.59px;font-size:12.3px;line-height:12.3px;letter-spacing:-0.599px;color:#1a3ad0;">109....</span>
<div style="position:absolute;left:4px;top:219px;width:163px;height:20px;background:#b4fbb4;overflow:hidden;"></div>
<span class="t" style="left:24.50px;top:222.59px;font-size:12.3px;line-height:12.3px;letter-spacing:-0.954px;">AUD...</span><span class="t" style="left:86.00px;top:222.59px;font-size:12.3px;line-height:12.3px;letter-spacing:-0.670px;color:#e0301a;">0.73...</span><span class="t" style="left:132.50px;top:222.59px;font-size:12.3px;line-height:12.3px;letter-spacing:-0.670px;color:#e0301a;">0.73...</span>
<div style="position:absolute;left:4px;top:239px;width:163px;height:20px;background:#b4fbb4;overflow:hidden;"></div>
<span class="t" style="left:24.50px;top:242.59px;font-size:12.3px;line-height:12.3px;letter-spacing:-0.954px;">USD...</span><span class="t" style="left:86.00px;top:242.59px;font-size:12.3px;line-height:12.3px;letter-spacing:-0.670px;color:#1a3ad0;">1.26...</span><span class="t" style="left:132.50px;top:242.59px;font-size:12.3px;line-height:12.3px;letter-spacing:-0.670px;color:#1a3ad0;">1.26...</span>
<div style="position:absolute;left:4px;top:259px;width:163px;height:20px;background:#b4fbb4;overflow:hidden;"></div>
<span class="t" style="left:24.50px;top:262.59px;font-size:12.3px;line-height:12.3px;letter-spacing:-0.838px;">NZD...</span><span class="t" style="left:86.00px;top:262.59px;font-size:12.3px;line-height:12.3px;letter-spacing:-0.670px;color:#1a3ad0;">0.71...</span><span class="t" style="left:132.50px;top:262.59px;font-size:12.3px;line-height:12.3px;letter-spacing:-0.670px;color:#1a3ad0;">0.71...</span>
<div style="position:absolute;left:4px;top:279px;width:163px;height:20px;background:#f2fff0;overflow:hidden;"></div>
<span class="t" style="left:24.50px;top:282.59px;font-size:12.3px;line-height:12.3px;letter-spacing:-0.954px;">AUD...</span><span class="t" style="left:86.00px;top:282.59px;font-size:12.3px;line-height:12.3px;letter-spacing:-0.670px;color:#1a3ad0;">0.93...</span><span class="t" style="left:132.50px;top:282.59px;font-size:12.3px;line-height:12.3px;letter-spacing:-0.670px;color:#1a3ad0;">0.93...</span>
<div style="position:absolute;left:4px;top:299px;width:163px;height:8px;background:#f2fff0;overflow:hidden;"></div>
<div style="position:absolute;left:0;top:0;width:188px;height:307px;overflow:hidden;"><span class="t" style="left:24.50px;top:302.59px;font-size:12.3px;line-height:12.3px;letter-spacing:-0.954px;">AUD...</span><span class="t" style="left:86.00px;top:302.59px;font-size:12.3px;line-height:12.3px;letter-spacing:-0.670px;color:#e0301a;">0.67...</span><span class="t" style="left:132.50px;top:302.59px;font-size:12.3px;line-height:12.3px;letter-spacing:-0.670px;color:#e0301a;">0.67...</span></div>
<div style="position:absolute;left:4px;top:139px;width:163px;height:1px;background:#a2d2a2;"></div>
<div style="position:absolute;left:4px;top:159px;width:163px;height:1px;background:#a2d2a2;"></div>
<div style="position:absolute;left:4px;top:179px;width:163px;height:1px;background:#a2d2a2;"></div>
<div style="position:absolute;left:4px;top:199px;width:163px;height:1px;background:#a2d2a2;"></div>
<div style="position:absolute;left:4px;top:219px;width:163px;height:1px;background:#a2d2a2;"></div>
<div style="position:absolute;left:4px;top:239px;width:163px;height:1px;background:#a2d2a2;"></div>
<div style="position:absolute;left:4px;top:259px;width:163px;height:1px;background:#a2d2a2;"></div>
<div style="position:absolute;left:4px;top:279px;width:163px;height:1px;background:#a2d2a2;"></div>
<div style="position:absolute;left:4px;top:299px;width:163px;height:1px;background:#d4dcd4;"></div>
<svg style="position:absolute;left:0px;top:0px;" width="188" height="307" viewBox="0 0 188 307"><g transform="translate(8,144.5)"><path d="M5.500 0.500L10.800 5.200H8V9H3V5.200H0.200Z" fill="#3fd03f" stroke="#0a7a0a" stroke-width="1"/><path d="M5.500 2.300l2.600 2.300h-1.300v3.200h-2.600v-3.200h-1.300z" fill="#a8f0a8" fill-opacity="0.550"/></g><g transform="translate(8,164.5)"><path d="M5.500 9.300L10.800 4.600H8V0.800H3V4.600H0.200Z" fill="#f4623a" stroke="#b83410" stroke-width="1"/><path d="M5.500 7.500l2.600-2.300h-1.300v-3.200h-2.600v3.200h-1.300z" fill="#ffc0a0" fill-opacity="0.500"/></g><g transform="translate(8,184.5)"><path d="M5.500 0.500L10.800 5.200H8V9H3V5.200H0.200Z" fill="#3fd03f" stroke="#0a7a0a" stroke-width="1"/><path d="M5.500 2.300l2.600 2.300h-1.300v3.200h-2.600v-3.200h-1.300z" fill="#a8f0a8" fill-opacity="0.550"/></g><g transform="translate(8,204.5)"><path d="M5.500 0.500L10.800 5.200H8V9H3V5.200H0.200Z" fill="#3fd03f" stroke="#0a7a0a" stroke-width="1"/><path d="M5.500 2.300l2.600 2.300h-1.300v3.200h-2.600v-3.200h-1.300z" fill="#a8f0a8" fill-opacity="0.550"/></g><g transform="translate(8,224.5)"><path d="M5.500 9.300L10.800 4.600H8V0.800H3V4.600H0.200Z" fill="#f4623a" stroke="#b83410" stroke-width="1"/><path d="M5.500 7.500l2.600-2.300h-1.300v-3.200h-2.600v3.200h-1.300z" fill="#ffc0a0" fill-opacity="0.500"/></g><g transform="translate(8,244.5)"><path d="M5.500 0.500L10.800 5.200H8V9H3V5.200H0.200Z" fill="#3fd03f" stroke="#0a7a0a" stroke-width="1"/><path d="M5.500 2.300l2.600 2.300h-1.300v3.200h-2.600v-3.200h-1.300z" fill="#a8f0a8" fill-opacity="0.550"/></g><g transform="translate(8,264.5)"><path d="M5.500 0.500L10.800 5.200H8V9H3V5.200H0.200Z" fill="#3fd03f" stroke="#0a7a0a" stroke-width="1"/><path d="M5.500 2.300l2.600 2.300h-1.300v3.200h-2.600v-3.200h-1.300z" fill="#a8f0a8" fill-opacity="0.550"/></g><g transform="translate(8,284.5)"><path d="M5.500 0.500L10.800 5.200H8V9H3V5.200H0.200Z" fill="#3fd03f" stroke="#0a7a0a" stroke-width="1"/><path d="M5.500 2.300l2.600 2.300h-1.300v3.200h-2.600v-3.200h-1.300z" fill="#a8f0a8" fill-opacity="0.550"/></g><g transform="translate(8,304.5)"><path d="M5.500 9.300L10.800 4.600H8V0.800H3V4.600H0.200Z" fill="#f4623a" stroke="#b83410" stroke-width="1"/><path d="M5.500 7.500l2.600-2.300h-1.300v-3.200h-2.600v3.200h-1.300z" fill="#ffc0a0" fill-opacity="0.500"/></g></svg>
<div style="position:absolute;left:72px;top:116px;width:1px;height:191px;background:rgba(120,140,120,0.250);"></div>
<div style="position:absolute;left:118px;top:116px;width:1px;height:191px;background:rgba(120,140,120,0.250);"></div>
<div style="position:absolute;left:167px;top:116px;width:17px;height:191px;background:#f0f0f0;"></div>
<div style="position:absolute;left:167px;top:132px;width:15px;height:16px;background:#cdcdcd;"></div>
<svg style="position:absolute;left:171px;top:121px;" width="9" height="6" viewBox="0 0 9 6"><path d="M0.500 4.500l3.500-3.500 3.500 3.500" stroke="#555" stroke-width="1.900" fill="none"/></svg>
<svg style="position:absolute;left:171px;top:296px;" width="9" height="6" viewBox="0 0 9 6"><path d="M0.500 0.800l3.500 3.500 3.500-3.500" stroke="#555" stroke-width="1.900" fill="none"/></svg>
<div style="position:absolute;left:3px;top:308px;width:181px;height:1px;background:#000;"></div>
<div style="position:absolute;left:6px;top:308px;width:65px;height:20px;background:#fff;border:1px solid #000;border-top:none;box-sizing:border-box;box-shadow:1px 1px 0 #000;"></div>
<span class="t" style="left:16.00px;top:311.59px;font-size:12.3px;line-height:12.3px;letter-spacing:-0.238px;">Symbols</span>
<span class="t" style="left:82.00px;top:311.59px;font-size:12.3px;line-height:12.3px;letter-spacing:-0.259px;color:#7a7a7a;">Tick Chart</span>
<div style="position:absolute;left:146px;top:312px;width:1px;height:13px;background:#606060;"></div>
<div style="position:absolute;left:0px;top:333px;width:188px;height:236px;background:#f0f0f0;"></div>
<div style="position:absolute;left:0px;top:333px;width:187px;height:1px;background:#b0b0b0;"></div>
<div style="position:absolute;left:184px;top:98px;width:3px;height:470px;background:#fbfbfb;"></div>
<div style="position:absolute;left:3px;top:336px;width:167px;height:14px;background:linear-gradient(90deg,#c2d2e6,#dbe6f2);"></div>
<span class="t" style="left:5.50px;top:337.09px;font-size:11px;line-height:11px;letter-spacing:-0.064px;">Navigator</span>
<svg style="position:absolute;left:174px;top:338px;" width="8" height="8" viewBox="0 0 8 8"><path d="M1.300 1.500l5.400 5.400M6.700 1.500l-5.400 5.400" stroke="#000" stroke-width="1.700"/></svg>
<div style="position:absolute;left:3px;top:351px;width:182px;height:191px;background:#fff;border-left:1px solid #a0a0a0;border-top:1px solid #a0a0a0;box-sizing:border-box;"></div>
<div style="position:absolute;left:4px;top:352px;width:162px;height:190px;overflow:hidden;"><div style="position:absolute;left:-4px;top:-352px;"><span class="t" style="left:73.50px;top:354.89px;font-size:12.3px;line-height:12.3px;letter-spacing:-0.233px;white-space:nowrap;">DeMarker (mtf + alerts)</span><span class="t" style="left:73.50px;top:372.89px;font-size:12.3px;line-height:12.3px;letter-spacing:-0.141px;white-space:nowrap;">Directional volatility</span><span class="t" style="left:73.50px;top:390.89px;font-size:12.3px;line-height:12.3px;letter-spacing:-0.177px;white-space:nowrap;">DoublecciWoody</span><span class="t" style="left:73.50px;top:408.89px;font-size:12.3px;line-height:12.3px;letter-spacing:-0.432px;white-space:nowrap;">dpo averages atr channel</span><span class="t" style="left:73.50px;top:426.89px;font-size:12.3px;line-height:12.3px;letter-spacing:-0.069px;white-space:nowrap;">dpo t3 atr - channel</span><span class="t" style="left:73.50px;top:444.89px;font-size:12.3px;line-height:12.3px;letter-spacing:-0.765px;white-space:nowrap;">DSS Bressert - averages</span><span class="t" style="left:73.50px;top:462.89px;font-size:12.3px;line-height:12.3px;letter-spacing:-0.420px;white-space:nowrap;">DSS jurik dots (fl's)</span><span class="t" style="left:73.50px;top:480.89px;font-size:12.3px;line-height:12.3px;letter-spacing:-0.608px;white-space:nowrap;">DU index VIDYA mtf</span><span class="t" style="left:73.50px;top:498.89px;font-size:12.3px;line-height:12.3px;letter-spacing:-0.537px;white-space:nowrap;">Dynamix27 TT</span><span class="t" style="left:73.50px;top:516.89px;font-size:12.3px;line-height:12.3px;letter-spacing:-0.402px;white-space:nowrap;">DZ OnChart Stochastic</span><span class="t" style="left:73.50px;top:534.89px;font-size:12.3px;line-height:12.3px;letter-spacing:-0.460px;white-space:nowrap;">Ehlers - Fisher transform</span><svg style="position:absolute;left:0px;top:0px;" width="188" height="542" viewBox="0 0 188 542"><g transform="translate(51,353)"><defs><linearGradient id="fyg" x1="0" y1="0" x2="1" y2="1"><stop offset="0" stop-color="#faf0a0"/><stop offset="1" stop-color="#eed448"/></linearGradient></defs><rect x="0.500" y="0.500" width="13" height="13" rx="2.200" fill="url(#fyg)" stroke="#b49a30"/><path d="M9.200 3.200c-1.800-.6-2.600.6-3 2.800s-.7 4.300-2.700 3.900M4.300 6.300h4.600" stroke="#6e6008" fill="none" stroke-width="1.300"/><path d="M11.500 8l3.200 3.200-3.200 3.200-3.200-3.200z" fill="#c4c4dc" stroke="#8a7a28" stroke-width="0.900"/></g><path d="M39 362.5h11" stroke="#909090" stroke-dasharray="1 1"/><g transform="translate(51,371)"><defs><linearGradient id="fyg" x1="0" y1="0" x2="1" y2="1"><stop offset="0" stop-color="#faf0a0"/><stop offset="1" stop-color="#eed448"/></linearGradient></defs><rect x="0.500" y="0.500" width="13" height="13" rx="2.200" fill="url(#fyg)" stroke="#b49a30"/><path d="M9.200 3.200c-1.800-.6-2.600.6-3 2.800s-.7 4.300-2.700 3.900M4.300 6.300h4.600" stroke="#6e6008" fill="none" stroke-width="1.300"/><path d="M11.500 8l3.200 3.200-3.200 3.200-3.200-3.200z" fill="#f2d84e" stroke="#8a7a28" stroke-width="0.900"/></g><path d="M39 380.5h11" stroke="#909090" stroke-dasharray="1 1"/><g transform="translate(51,389)"><defs><linearGradient id="fyg" x1="0" y1="0" x2="1" y2="1"><stop offset="0" stop-color="#faf0a0"/><stop offset="1" stop-color="#eed448"/></linearGradient></defs><rect x="0.500" y="0.500" width="13" height="13" rx="2.200" fill="url(#fyg)" stroke="#b49a30"/><path d="M9.200 3.200c-1.800-.6-2.600.6-3 2.800s-.7 4.300-2.700 3.900M4.300 6.300h4.600" stroke="#6e6008" fill="none" stroke-width="1.300"/><path d="M11.500 8l3.200 3.200-3.200 3.200-3.200-3.200z" fill="#c4c4dc" stroke="#8a7a28" stroke-width="0.900"/></g><path d="M39 398.5h11" stroke="#909090" stroke-dasharray="1 1"/><g transform="translate(51,407)"><defs><linearGradient id="fyg" x1="0" y1="0" x2="1" y2="1"><stop offset="0" stop-color="#faf0a0"/><stop offset="1" stop-color="#eed448"/></linearGradient></defs><rect x="0.500" y="0.500" width="13" height="13" rx="2.200" fill="url(#fyg)" stroke="#b49a30"/><path d="M9.200 3.200c-1.800-.6-2.600.6-3 2.800s-.7 4.300-2.700 3.900M4.300 6.300h4.600" stroke="#6e6008" fill="none" stroke-width="1.300"/><path d="M11.500 8l3.200 3.200-3.200 3.200-3.200-3.200z" fill="#c4c4dc" stroke="#8a7a28" stroke-width="0.900"/></g><path d="M39 416.5h11" stroke="#909090" stroke-dasharray="1 1"/><g transform="translate(51,425)"><defs><linearGradient id="fyg" x1="0" y1="0" x2="1" y2="1"><stop offset="0" stop-color="#faf0a0"/><stop offset="1" stop-color="#eed448"/></linearGradient></defs><rect x="0.500" y="0.500" width="13" height="13" rx="2.200" fill="url(#fyg)" stroke="#b49a30"/><path d="M9.200 3.200c-1.800-.6-2.600.6-3 2.800s-.7 4.300-2.700 3.900M4.300 6.300h4.600" stroke="#6e6008" fill="none" stroke-width="1.300"/><path d="M11.500 8l3.200 3.200-3.200 3.200-3.200-3.200z" fill="#f2d84e" stroke="#8a7a28" stroke-width="0.900"/></g><path d="M39 434.5h11" stroke="#909090" stroke-dasharray="1 1"/><g transform="translate(51,443)"><defs><linearGradient id="fyg" x1="0" y1="0" x2="1" y2="1"><stop offset="0" stop-color="#faf0a0"/><stop offset="1" stop-color="#eed448"/></linearGradient></defs><rect x="0.500" y="0.500" width="13" height="13" rx="2.200" fill="url(#fyg)" stroke="#b49a30"/><path d="M9.200 3.200c-1.800-.6-2.600.6-3 2.800s-.7 4.300-2.700 3.900M4.300 6.300h4.600" stroke="#6e6008" fill="none" stroke-width="1.300"/><path d="M11.500 8l3.200 3.200-3.200 3.200-3.200-3.200z" fill="#f2d84e" stroke="#8a7a28" stroke-width="0.900"/></g><path d="M39 452.5h11" stroke="#909090" stroke-dasharray="1 1"/><g transform="translate(51,461)"><defs><linearGradient id="fyg" x1="0" y1="0" x2="1" y2="1"><stop offset="0" stop-color="#faf0a0"/><stop offset="1" stop-color="#eed448"/></linearGradient></defs><rect x="0.500" y="0.500" width="13" height="13" rx="2.200" fill="url(#fyg)" stroke="#b49a30"/><path d="M9.200 3.200c-1.800-.6-2.600.6-3 2.800s-.7 4.300-2.700 3.900M4.300 6.300h4.600" stroke="#6e6008" fill="none" stroke-width="1.300"/><path d="M11.500 8l3.200 3.200-3.200 3.200-3.200-3.200z" fill="#c4c4dc" stroke="#8a7a28" stroke-width="0.900"/></g><path d="M39 470.5h11" stroke="#909090" stroke-dasharray="1 1"/><g transform="translate(51,479)"><defs><linearGradient id="fyg" x1="0" y1="0" x2="1" y2="1"><stop offset="0" stop-color="#faf0a0"/><stop offset="1" stop-color="#eed448"/></linearGradient></defs><rect x="0.500" y="0.500" width="13" height="13" rx="2.200" fill="url(#fyg)" stroke="#b49a30"/><path d="M9.200 3.200c-1.800-.6-2.600.6-3 2.800s-.7 4.300-2.700 3.900M4.300 6.300h4.600" stroke="#6e6008" fill="none" stroke-width="1.300"/><path d="M11.500 8l3.200 3.200-3.200 3.200-3.200-3.200z" fill="#c4c4dc" stroke="#8a7a28" stroke-width="0.900"/></g><path d="M39 488.5h11" stroke="#909090" stroke-dasharray="1 1"/><g transform="translate(51,497)"><defs><linearGradient id="fyg" x1="0" y1="0" x2="1" y2="1"><stop offset="0" stop-color="#faf0a0"/><stop offset="1" stop-color="#eed448"/></linearGradient></defs><rect x="0.500" y="0.500" width="13" height="13" rx="2.200" fill="url(#fyg)" stroke="#b49a30"/><path d="M9.200 3.200c-1.800-.6-2.600.6-3 2.800s-.7 4.300-2.700 3.900M4.300 6.300h4.600" stroke="#6e6008" fill="none" stroke-width="1.300"/><path d="M11.500 8l3.200 3.200-3.200 3.200-3.200-3.200z" fill="#c4c4dc" stroke="#8a7a28" stroke-width="0.900"/></g><path d="M39 506.5h11" stroke="#909090" stroke-dasharray="1 1"/><g transform="translate(51,515)"><defs><linearGradient id="fyg" x1="0" y1="0" x2="1" y2="1"><stop offset="0" stop-color="#faf0a0"/><stop offset="1" stop-color="#eed448"/></linearGradient></defs><rect x="0.500" y="0.500" width="13" height="13" rx="2.200" fill="url(#fyg)" stroke="#b49a30"/><path d="M9.200 3.200c-1.800-.6-2.600.6-3 2.800s-.7 4.300-2.700 3.900M4.300 6.300h4.600" stroke="#6e6008" fill="none" stroke-width="1.300"/><path d="M11.500 8l3.200 3.200-3.200 3.200-3.200-3.200z" fill="#c4c4dc" stroke="#8a7a28" stroke-width="0.900"/></g><path d="M39 524.5h11" stroke="#909090" stroke-dasharray="1 1"/><g transform="translate(51,533)"><defs><linearGradient id="fyg" x1="0" y1="0" x2="1" y2="1"><stop offset="0" stop-color="#faf0a0"/><stop offset="1" stop-color="#eed448"/></linearGradient></defs><rect x="0.500" y="0.500" width="13" height="13" rx="2.200" fill="url(#fyg)" stroke="#b49a30"/><path d="M9.200 3.200c-1.800-.6-2.600.6-3 2.800s-.7 4.300-2.700 3.900M4.300 6.300h4.600" stroke="#6e6008" fill="none" stroke-width="1.300"/><path d="M11.500 8l3.200 3.200-3.200 3.200-3.200-3.200z" fill="#c4c4dc" stroke="#8a7a28" stroke-width="0.900"/></g><path d="M39 542.5h11" stroke="#909090" stroke-dasharray="1 1"/><path d="M17.500 352v190M38.500 352v190" stroke="#808080" stroke-dasharray="1 1"/></svg></div></div>
<div style="position:absolute;left:167px;top:352px;width:17px;height:190px;background:#f0f0f0;"></div>
<div style="position:absolute;left:167px;top:418px;width:15px;height:16px;background:#cdcdcd;"></div>
<svg style="position:absolute;left:171px;top:357px;" width="9" height="6" viewBox="0 0 9 6"><path d="M0.500 4.500l3.500-3.500 3.500 3.500" stroke="#555" stroke-width="1.900" fill="none"/></svg>
<svg style="position:absolute;left:171px;top:532px;" width="9" height="6" viewBox="0 0 9 6"><path d="M0.500 0.800l3.500 3.500 3.500-3.500" stroke="#555" stroke-width="1.900" fill="none"/></svg>
<div style="position:absolute;left:3px;top:543px;width:181px;height:1px;background:#000;"></div>
<div style="position:absolute;left:6px;top:543px;width:72px;height:20px;background:#fff;border:1px solid #000;border-top:none;box-sizing:border-box;box-shadow:1px 1px 0 #000;"></div>
<span class="t" style="left:16.00px;top:546.59px;font-size:12.3px;line-height:12.3px;letter-spacing:0.100px;">Common</span>
<span class="t" style="left:87.00px;top:546.59px;font-size:12.3px;line-height:12.3px;letter-spacing:-0.398px;color:#7a7a7a;">Favorites</span>
<div style="position:absolute;left:146px;top:547px;width:1px;height:13px;background:#606060;"></div>
<div style="position:absolute;left:189px;top:547px;width:1177px;height:24px;background:#f0f0f0;"></div>
<div style="position:absolute;left:189px;top:547px;width:1177px;height:2px;background:#fff;"></div>
<div style="position:absolute;left:189px;top:549px;width:1177px;height:1px;background:#000;"></div>
<span class="t" style="left:203.00px;top:552.59px;font-size:12.3px;line-height:12.3px;letter-spacing:-1.120px;color:#707070;">EURUSD,H1</span>
<span class="t" style="left:287.00px;top:552.59px;font-size:12.3px;line-height:12.3px;letter-spacing:-1.120px;color:#707070;">EURUSD,H1</span>
<span class="t" style="left:372.00px;top:552.59px;font-size:12.3px;line-height:12.3px;letter-spacing:-0.686px;color:#707070;">GBPAUD,H1</span>
<span class="t" style="left:460.00px;top:552.59px;font-size:12.3px;line-height:12.3px;letter-spacing:-0.787px;color:#707070;">GBPCAD,H1</span>
<span class="t" style="left:547.00px;top:552.59px;font-size:12.3px;line-height:12.3px;letter-spacing:-0.781px;color:#707070;">GBPCHF,H1</span>
<span class="t" style="left:632.00px;top:552.59px;font-size:12.3px;line-height:12.3px;letter-spacing:-1.010px;color:#707070;">GBPJPY,H1</span>
<span class="t" style="left:713.00px;top:552.59px;font-size:12.3px;line-height:12.3px;letter-spacing:-0.822px;color:#707070;">GBPNZD,H1</span>
<span class="t" style="left:800.00px;top:552.59px;font-size:12.3px;line-height:12.3px;letter-spacing:-1.121px;color:#707070;">GBPUSD,H1</span>
<span class="t" style="left:884.00px;top:552.59px;font-size:12.3px;line-height:12.3px;letter-spacing:-1.121px;color:#707070;">GBPUSD,H1</span>
<div style="position:absolute;left:276px;top:553px;width:1px;height:13px;background:#606060;"></div>
<div style="position:absolute;left:360px;top:553px;width:1px;height:13px;background:#606060;"></div>
<div style="position:absolute;left:448px;top:553px;width:1px;height:13px;background:#606060;"></div>
<div style="position:absolute;left:536px;top:553px;width:1px;height:13px;background:#606060;"></div>
<div style="position:absolute;left:620px;top:553px;width:1px;height:13px;background:#606060;"></div>
<div style="position:absolute;left:701px;top:553px;width:1px;height:13px;background:#606060;"></div>
<div style="position:absolute;left:789px;top:553px;width:1px;height:13px;background:#606060;"></div>
<div style="position:absolute;left:872px;top:553px;width:1px;height:13px;background:#606060;"></div>
<div style="position:absolute;left:957px;top:549px;width:84px;height:18px;background:#fff;border:1px solid #000;border-top:none;box-sizing:border-box;box-shadow:1px 1px 0 #000;"></div>
<span class="t" style="left:968.00px;top:552.59px;font-size:12.3px;line-height:12.3px;letter-spacing:-1.121px;">GBPUSD,H1</span>
<svg style="position:absolute;left:1330px;top:553px;" width="30" height="10" viewBox="0 0 30 10"><path d="M8 1.500v6l-4-3z M23 1.500v6l4-3z" fill="#a0a0a0"/></svg>
<div style="position:absolute;left:0px;top:568px;width:1366px;height:139px;background:#f0f0f0;"></div>
<div style="position:absolute;left:0px;top:568px;width:1366px;height:1px;background:#fafafa;"></div>
<div style="position:absolute;left:0px;top:569px;width:1366px;height:1px;background:#b8b8b8;"></div>
<div style="position:absolute;left:2px;top:588px;width:12px;height:112px;background:linear-gradient(180deg,#dbe6f2,#bccfe6);"></div>
<svg style="position:absolute;left:3px;top:574.5px;" width="8" height="8" viewBox="0 0 8 8"><path d="M1.300 1.500l5.400 5.400M6.700 1.500l-5.400 5.400" stroke="#000" stroke-width="1.700"/></svg>
<span class="t" style="left:-13.500px;top:672.500px;width:42px;font-size:11.500px;line-height:14px;transform:rotate(-90deg);transform-origin:center;letter-spacing:0.100px;">Terminal</span>
<div style="position:absolute;left:15px;top:573px;width:1348px;height:105px;background:#fff;border-left:1px solid #a0a0a0;border-top:1px solid #a0a0a0;box-sizing:border-box;"></div>
<span class="t" style="left:22.50px;top:579.59px;font-size:12.3px;line-height:12.3px;letter-spacing:-0.094px;">Time</span>
<span class="t" style="left:182.00px;top:579.59px;font-size:12.3px;line-height:12.3px;letter-spacing:-0.487px;">Message</span>
<div style="position:absolute;left:175px;top:574px;width:1px;height:104px;background:#e0e0e0;"></div>
<div style="position:absolute;left:16px;top:599px;width:1329px;height:18px;background:#ebebeb;"></div>
<div style="position:absolute;left:16px;top:598px;width:1330px;height:1px;background:#d4d4d4;"></div>
<span class="t" style="left:38.00px;top:601.59px;font-size:12.3px;line-height:12.3px;letter-spacing:-0.669px;">2021.09.11 19:30:31.855</span>
<span class="t" style="left:180.00px;top:601.59px;font-size:12.3px;line-height:12.3px;letter-spacing:-0.332px;">DZ OnChart Stochastic (mtf) GBPUSD,H1: initialized</span>
<div style="position:absolute;left:16px;top:617px;width:1330px;height:1px;background:#d4d4d4;"></div>
<span class="t" style="left:38.00px;top:621.59px;font-size:12.3px;line-height:12.3px;letter-spacing:-0.669px;">2021.09.11 19:30:30.572</span>
<span class="t" style="left:180.00px;top:621.59px;font-size:12.3px;line-height:12.3px;letter-spacing:-0.271px;">Custom indicator DZ OnChart Stochastic (mtf) GBPUSD,H1: loaded successfully</span>
<div style="position:absolute;left:16px;top:638px;width:1329px;height:19px;background:#ebebeb;"></div>
<div style="position:absolute;left:16px;top:637px;width:1330px;height:1px;background:#d4d4d4;"></div>
<span class="t" style="left:38.00px;top:641.59px;font-size:12.3px;line-height:12.3px;letter-spacing:-0.669px;">2021.09.11 19:29:46.688</span>
<span class="t" style="left:180.00px;top:641.59px;font-size:12.3px;line-height:12.3px;letter-spacing:-0.332px;">DZ OnChart Stochastic (mtf) GBPUSD,H1: initialized</span>
<div style="position:absolute;left:16px;top:657px;width:1330px;height:1px;background:#d4d4d4;"></div>
<span class="t" style="left:38.00px;top:661.59px;font-size:12.3px;line-height:12.3px;letter-spacing:-0.669px;">2021.09.11 19:29:45.453</span>
<span class="t" style="left:180.00px;top:661.59px;font-size:12.3px;line-height:12.3px;letter-spacing:-0.271px;">Custom indicator DZ OnChart Stochastic (mtf) GBPUSD,H1: loaded successfully</span>
<div style="position:absolute;left:16px;top:677px;width:1330px;height:1px;background:#d4d4d4;"></div>
<svg style="position:absolute;left:0px;top:0px;" width="60" height="700" viewBox="0 0 60 700"><circle cx="25.500" cy="607" r="3" fill="#a8a8a8" stroke="#808080" stroke-width="0.800"/><circle cx="25.500" cy="627" r="3" fill="#a8a8a8" stroke="#808080" stroke-width="0.800"/><circle cx="25.500" cy="647" r="3" fill="#a8a8a8" stroke="#808080" stroke-width="0.800"/><circle cx="25.500" cy="667" r="3" fill="#a8a8a8" stroke="#808080" stroke-width="0.800"/></svg>
<div style="position:absolute;left:1345px;top:574px;width:18px;height:104px;background:#f0f0f0;"></div>
<div style="position:absolute;left:1346px;top:591px;width:15px;height:17px;background:#cdcdcd;"></div>
<svg style="position:absolute;left:1350px;top:580px;" width="9" height="6" viewBox="0 0 9 6"><path d="M0.500 4.500l3.500-3.500 3.500 3.500" stroke="#555" stroke-width="1.900" fill="none"/></svg>
<svg style="position:absolute;left:1350px;top:667px;" width="9" height="6" viewBox="0 0 9 6"><path d="M0.500 0.800l3.500 3.500 3.500-3.500" stroke="#555" stroke-width="1.900" fill="none"/></svg>
<div style="position:absolute;left:15px;top:678px;width:1347px;height:1px;background:#000;"></div>
<span class="t" style="left:28.00px;top:682.59px;font-size:12.3px;line-height:12.3px;letter-spacing:-0.535px;color:#707070;">Trade</span>
<span class="t" style="left:78.00px;top:682.59px;font-size:12.3px;line-height:12.3px;letter-spacing:-0.621px;color:#707070;">Exposure</span>
<span class="t" style="left:145.00px;top:682.59px;font-size:12.3px;line-height:12.3px;letter-spacing:-0.009px;color:#707070;">Account History</span>
<span class="t" style="left:251.00px;top:682.59px;font-size:12.3px;line-height:12.3px;letter-spacing:-0.689px;color:#707070;">News</span>
<span class="t" style="left:312.00px;top:682.59px;font-size:12.3px;line-height:12.3px;letter-spacing:-0.240px;color:#707070;">Alerts</span>
<span class="t" style="left:362.00px;top:682.59px;font-size:12.3px;line-height:12.3px;letter-spacing:-0.055px;color:#707070;">Mailbox</span>
<span class="t" style="left:431.00px;top:682.59px;font-size:12.3px;line-height:12.3px;letter-spacing:-0.099px;color:#707070;">Market</span>
<span class="t" style="left:488.00px;top:682.59px;font-size:12.3px;line-height:12.3px;letter-spacing:-0.478px;color:#707070;">Signals</span>
<span class="t" style="left:545.00px;top:682.59px;font-size:12.3px;line-height:12.3px;letter-spacing:-0.166px;color:#707070;">Articles</span>
<span class="t" style="left:611.00px;top:682.59px;font-size:12.3px;line-height:12.3px;letter-spacing:-0.651px;color:#707070;">Code Base</span>
<span class="t" style="left:282.00px;top:689.38px;font-size:9px;line-height:9px;color:#d02010;font-weight:bold;">73</span>
<span class="t" style="left:406.00px;top:689.38px;font-size:9px;line-height:9px;color:#d02010;font-weight:bold;">6</span>
<span class="t" style="left:586.00px;top:689.38px;font-size:9px;line-height:9px;color:#d02010;font-weight:bold;">5</span>
<div style="position:absolute;left:67px;top:683px;width:1px;height:13px;background:#606060;"></div>
<div style="position:absolute;left:135px;top:683px;width:1px;height:13px;background:#606060;"></div>
<div style="position:absolute;left:241px;top:683px;width:1px;height:13px;background:#606060;"></div>
<div style="position:absolute;left:302px;top:683px;width:1px;height:13px;background:#606060;"></div>
<div style="position:absolute;left:352px;top:683px;width:1px;height:13px;background:#606060;"></div>
<div style="position:absolute;left:421px;top:683px;width:1px;height:13px;background:#606060;"></div>
<div style="position:absolute;left:478px;top:683px;width:1px;height:13px;background:#606060;"></div>
<div style="position:absolute;left:535px;top:683px;width:1px;height:13px;background:#606060;"></div>
<div style="position:absolute;left:601px;top:683px;width:1px;height:13px;background:#606060;"></div>
<div style="position:absolute;left:677px;top:678px;width:56px;height:20px;background:#fff;border:1px solid #000;border-top:none;box-sizing:border-box;box-shadow:1px 1px 0 #000;"></div>
<span class="t" style="left:686.00px;top:682.59px;font-size:12.3px;line-height:12.3px;letter-spacing:-0.671px;">Experts</span>
<span class="t" style="left:742.00px;top:682.59px;font-size:12.3px;line-height:12.3px;letter-spacing:-0.192px;color:#707070;">Journal</span>
<div style="position:absolute;left:791px;top:683px;width:1px;height:13px;background:#606060;"></div>
<div style="position:absolute;left:0px;top:704px;width:1366px;height:24px;background:#f0f0f0;border-top:1px solid #b4b4b4;box-sizing:border-box;"></div>
<span class="t" style="left:2.00px;top:711.59px;font-size:12.3px;line-height:12.3px;letter-spacing:-0.492px;">For Help, press F1</span>
<span class="t" style="left:679.00px;top:711.59px;font-size:12.3px;line-height:12.3px;letter-spacing:-0.906px;">H1 - V16_05_06 - EUF</span>
<span class="t" style="left:794.00px;top:711.59px;font-size:12.3px;line-height:12.3px;letter-spacing:-0.735px;">2021.09.01 09:00</span>
<span class="t" style="left:896.00px;top:711.59px;font-size:12.3px;line-height:12.3px;letter-spacing:-0.786px;">O: 1.37421</span>
<span class="t" style="left:967.00px;top:711.59px;font-size:12.3px;line-height:12.3px;letter-spacing:-0.618px;">H: 1.37587</span>
<span class="t" style="left:1038.00px;top:711.59px;font-size:12.3px;line-height:12.3px;letter-spacing:-0.714px;">L: 1.37404</span>
<span class="t" style="left:1106.00px;top:711.59px;font-size:12.3px;line-height:12.3px;letter-spacing:-0.718px;">C: 1.37573</span>
<span class="t" style="left:1176.00px;top:711.59px;font-size:12.3px;line-height:12.3px;letter-spacing:-0.707px;">V: 8192</span>
<span class="t" style="left:1269.00px;top:711.59px;font-size:12.3px;line-height:12.3px;letter-spacing:-0.463px;">288317/31 kb</span>
<div style="position:absolute;left:672px;top:709px;width:1px;height:17px;background:#b8b8b8;"></div>
<div style="position:absolute;left:788px;top:709px;width:1px;height:17px;background:#b8b8b8;"></div>
<div style="position:absolute;left:890px;top:709px;width:1px;height:17px;background:#b8b8b8;"></div>
<div style="position:absolute;left:961px;top:709px;width:1px;height:17px;background:#b8b8b8;"></div>
<div style="position:absolute;left:1032px;top:709px;width:1px;height:17px;background:#b8b8b8;"></div>
<div style="position:absolute;left:1100px;top:709px;width:1px;height:17px;background:#b8b8b8;"></div>
<div style="position:absolute;left:1170px;top:709px;width:1px;height:17px;background:#b8b8b8;"></div>
<div style="position:absolute;left:1236px;top:709px;width:1px;height:17px;background:#b8b8b8;"></div>
<svg style="position:absolute;left:1241px;top:711px;" width="26" height="12" viewBox="0 0 26 12"><rect x="1.0" y="0" width="1.600" height="9.5" fill="#8ea322"/><rect x="1.0" y="10.3" width="1.600" height="1.7" fill="#14508a"/><rect x="3.5" y="0" width="1.600" height="8.6" fill="#8ea322"/><rect x="3.5" y="9.4" width="1.600" height="2.6" fill="#14508a"/><rect x="6.0" y="0" width="1.600" height="7.7" fill="#8ea322"/><rect x="6.0" y="8.5" width="1.600" height="3.5" fill="#14508a"/><rect x="8.5" y="0" width="1.600" height="6.8" fill="#8ea322"/><rect x="8.5" y="7.6" width="1.600" height="4.4" fill="#14508a"/><rect x="11.0" y="0" width="1.600" height="5.9" fill="#8ea322"/><rect x="11.0" y="6.7" width="1.600" height="5.3" fill="#14508a"/><rect x="13.5" y="0" width="1.600" height="5.0" fill="#8ea322"/><rect x="13.5" y="5.8" width="1.600" height="6.2" fill="#14508a"/><rect x="16.0" y="0" width="1.600" height="4.1" fill="#8ea322"/><rect x="16.0" y="4.9" width="1.600" height="7.1" fill="#14508a"/><rect x="18.5" y="0" width="1.600" height="3.2" fill="#8ea322"/><rect x="18.5" y="4.0" width="1.600" height="8.0" fill="#14508a"/><rect x="21.0" y="0" width="1.600" height="2.3" fill="#8ea322"/><rect x="21.0" y="3.1" width="1.600" height="8.9" fill="#14508a"/></svg>
<div style="position:absolute;left:0px;top:728px;width:1366px;height:39px;background:#010409;"></div>
<div style="position:absolute;left:245px;top:728px;width:48px;height:39px;background:#343538;"></div>
<div style="position:absolute;left:200px;top:765.5px;width:40px;height:1.5px;background:#76b9ed;"></div>
<div style="position:absolute;left:245px;top:765.5px;width:48px;height:1.5px;background:#9fd0f5;"></div>
<svg style="position:absolute;left:0px;top:728px;" width="1366" height="39" viewBox="0 0 1366 39"><path d="M16 14.500l6.500-.9v6.400h-6.500z M23.500 13.400l8.500-1.200v7.800h-8.500z M16 21h6.500v6.400l-6.500-.9z M23.500 21h8.500v7.800l-8.500-1.200z" fill="#fff"/><circle cx="75.500" cy="16.500" r="4.800" fill="none" stroke="#fff" stroke-width="1.300"/><path d="M72 20l-7.500 7.500" stroke="#fff" stroke-width="1.300"/><rect x="113.500" y="13.500" width="13" height="12" fill="none" stroke="#fff" stroke-width="1.300"/><path d="M111.500 15.500h-1.500v8h1.500M128.500 15.500h1.500v8h-1.500" stroke="#fff" fill="none" stroke-width="1.100"/><circle cx="171" cy="20" r="7" fill="none" stroke="#35b8ee" stroke-width="4.600"/><rect x="165" y="18.300" width="14" height="3.400" fill="#35b8ee"/><rect x="171.500" y="21.700" width="11" height="3.800" fill="#010409"/><path d="M160.500 27c-3-4 3-12 11-16.500s10-2.500 9.500 0" fill="none" stroke="#f0c030" stroke-width="1.700"/><path d="M209 11h7l2 2h13v16h-22z" fill="#e8b83a"/><path d="M209 15h22v15h-22z" fill="#f8dc78"/><rect x="213" y="22" width="14" height="8" fill="#4a9ad8"/><rect x="216" y="26" width="8" height="4" fill="#f8dc78"/><defs><linearGradient id="ficon2" x1="0" y1="0.300" x2="1" y2="0.700"><stop offset="0" stop-color="#3c20d0"/><stop offset="0.500" stop-color="#6a22d4"/><stop offset="1" stop-color="#b432e0"/></linearGradient></defs><circle cx="269" cy="20" r="12" fill="url(#ficon2)"/><path d="M265.500 26.500v-10.500a2 2 0 0 1 2-2h9" stroke="#ffe0ff" stroke-width="2" fill="none"/><path d="M268.500 17.800h4.500" stroke="#ffe0ff" stroke-width="1.600"/><circle cx="268.600" cy="21.500" r="1.100" fill="#ffd0ff"/><ellipse cx="317" cy="15" rx="9" ry="6" fill="#f4f4f4" stroke="#d03030" stroke-width="1.200"/><ellipse cx="313" cy="24" rx="5" ry="3" fill="#a0a0a0"/><path d="M314 13l10 16M322 13l-6 14" stroke="#3aa0e0" stroke-width="2"/><circle cx="325" cy="29" r="2.500" fill="none" stroke="#3aa0e0" stroke-width="1.500"/><rect x="1172.500" y="15.500" width="11.500" height="8.500" fill="none" stroke="#fff" stroke-width="1.200"/><path d="M1178 24v3.500M1173 27.500h8" stroke="#fff" stroke-width="1.200"/><rect x="1169.500" y="15.500" width="4" height="4" fill="#010409" stroke="#fff" stroke-width="1"/><path d="M1171.500 19.500v6h4" stroke="#fff" fill="none"/><path d="M1193.500 17.500h2.500l3.500-3.500v11l-3.500-3.500h-2.500z" fill="none" stroke="#fff" stroke-width="1.100"/><circle cx="1204.500" cy="23.500" r="4.500" fill="#e02838"/><path d="M1202.500 21.500l4 4M1206.500 21.500l-4 4" stroke="#fff" stroke-width="1.100"/><path d="M1325.500 12.500h15v10.500h-5l-2.500 2.800-2.500-2.800h-5z" fill="none" stroke="#fff" stroke-width="1.200"/><rect x="1361" y="0" width="1" height="39" fill="#4a4a4a"/></svg>
<span class="t" style="left:1219.50px;top:741.84px;font-size:12px;line-height:12px;letter-spacing:-1.168px;color:#fff;">ENG</span>
<span class="t" style="left:1260.50px;top:732.84px;font-size:12px;line-height:12px;letter-spacing:-0.413px;color:#fff;">7:31 PM</span>
<span class="t" style="left:1255.50px;top:750.84px;font-size:12px;line-height:12px;letter-spacing:-0.222px;color:#fff;">9/11/2021</span>
</body></html>
